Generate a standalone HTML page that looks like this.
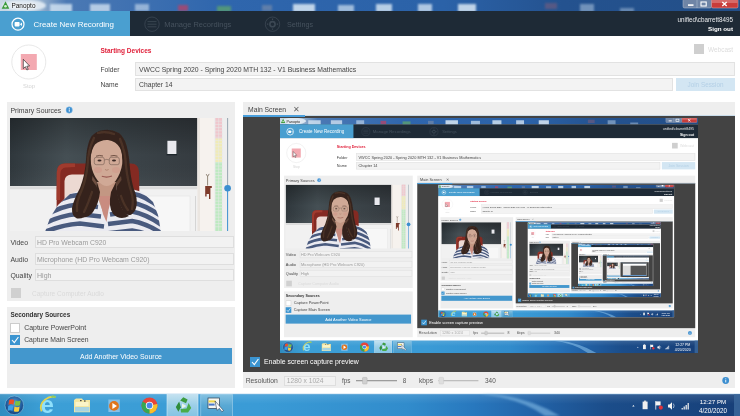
<!DOCTYPE html>
<html><head><meta charset="utf-8"><title>Panopto</title>
<style>
html,body{margin:0;padding:0;background:#fff;}
body{width:740px;height:416px;overflow:hidden;font-family:"Liberation Sans",sans-serif;}
.screen{position:absolute;left:0;top:0;width:740px;height:416px;overflow:hidden;background:#fff;}
.root{position:absolute;left:0;top:0;width:740px;height:416px;overflow:hidden;filter:blur(0.35px);}
.b{position:absolute;box-sizing:border-box;}
.t{position:absolute;line-height:10px;height:10px;white-space:nowrap;}
.titlebar{position:absolute;left:0;top:0;width:740px;height:11px;background:#3468ab;}
.navbar{left:0;top:11px;width:740px;height:25px;background:#1e2a36;}
.tab{left:0;top:11px;width:130px;height:25px;background:#4a9fd0;}
.inp{background:#f3f3f3;border:0.5px solid #e2e2e2;}
.inp2{background:#f2f2f2;border:0.5px solid #dedede;}
.panel{background:#eeeeee;}
.taskbar{position:absolute;left:0;top:394px;width:740px;height:22px;background:linear-gradient(180deg,rgba(255,255,255,0.12) 0%,rgba(255,255,255,0) 45%),linear-gradient(90deg,#2f8cc0 0%,#3c9fd6 6%,#3a9bd6 35%,#318ccc 55%,#2878be 64%,#2263a8 72%,#1b4d8a 82%,#173f78 100%);}
.nest{position:absolute;left:279.7px;top:118.4px;width:740px;height:416px;transform:scale(0.5649);transform-origin:0 0;overflow:hidden;filter:blur(0.8px);}
svg{position:absolute;overflow:visible}
</style></head>
<body>
<div class="root"><div class="screen">
<div class="titlebar"></div>
<div class="b navbar"></div>
<div class="b tab"></div>
<div class="b" style="left:0;top:36px;width:740px;height:358px;background:#fff"></div>
<div class="b inp" style="left:135px;top:62px;width:600px;height:14px"></div>
<div class="b inp" style="left:135px;top:78px;width:538px;height:13px"></div>
<div class="b" style="left:676px;top:78px;width:59px;height:13px;background:#d3e6f3"></div>
<div class="b" style="left:694px;top:44px;width:10px;height:10px;background:#cfcfcf"></div>
<div class="b panel" style="left:7px;top:102px;width:228px;height:199px"></div>
<div class="b panel" style="left:7px;top:307px;width:228px;height:81px"></div>
<div class="b panel" style="left:243px;top:102px;width:492px;height:286px"></div>
<div class="b" style="left:243px;top:115.4px;width:492px;height:256.6px;background:#434343;border-top:1.2px solid #c9dcea"></div><div class="b" style="left:243px;top:115.4px;width:62px;height:1.3px;background:#4a9fdc"></div>
<div class="b inp2" style="left:35px;top:236px;width:198.5px;height:12px"></div>
<div class="b inp2" style="left:35px;top:253px;width:198.5px;height:12px"></div>
<div class="b inp2" style="left:35px;top:269px;width:198.5px;height:12px"></div>
<div class="b" style="left:11px;top:288px;width:10px;height:10px;background:#d0d0d0"></div>
<div class="b" style="left:10px;top:323px;width:10px;height:10px;background:#fff;border:0.5px solid #ccc"></div>
<div class="b" style="left:10px;top:335px;width:10px;height:10px;background:#3b94d0"></div>
<div class="b" style="left:10px;top:347.5px;width:221.8px;height:16.5px;background:#4397cd"></div>
<div class="b" style="left:250px;top:357px;width:10px;height:10px;background:#3b94d0"></div>
<div class="b inp2" style="left:284px;top:375.5px;width:52px;height:10px"></div>
<div class="taskbar"></div>
<svg style="left:10px;top:118px" width="204" height="113" viewBox="10 118 204 113">
<defs>
<linearGradient id="wallg" x1="0" y1="0" x2="1" y2="0"><stop offset="0" stop-color="#2f373c"/><stop offset="0.3" stop-color="#454f54"/><stop offset="0.55" stop-color="#3d464b"/><stop offset="1" stop-color="#353b40"/></linearGradient>
<linearGradient id="wallv" x1="0" y1="0" x2="0" y2="1"><stop offset="0" stop-color="#000" stop-opacity="0.28"/><stop offset="0.55" stop-color="#000" stop-opacity="0"/><stop offset="1" stop-color="#fff" stop-opacity="0.04"/></linearGradient>
<filter id="bl" x="-5%" y="-5%" width="110%" height="110%"><feGaussianBlur stdDeviation="0.7"/></filter>
<filter id="bl2" x="-5%" y="-5%" width="110%" height="110%"><feGaussianBlur stdDeviation="0.45"/></filter>
<clipPath id="vc"><rect x="10" y="118" width="204" height="113"/></clipPath>
<clipPath id="shirtc"><path d="M45,232 L50,218 L58,205 L70,194 L84,189 L128,188 L142,192 L153,202 L158,215 L161,232 Z"/></clipPath>
</defs>
<g clip-path="url(#vc)">
<rect x="10" y="118" width="204" height="113" fill="#efefef"/>
<rect x="10" y="118" width="187.5" height="68" fill="url(#wallg)"/>
<rect x="10" y="118" width="187.5" height="68" fill="url(#wallv)"/>
<rect x="10" y="186.3" width="188" height="3.2" fill="#dcdcdc"/>
<rect x="10" y="189.5" width="188" height="42" fill="#f1f1f1"/>
<rect x="197.5" y="118" width="16.5" height="113" fill="#f6f2ee"/>
<rect x="197.5" y="118" width="2.5" height="113" fill="#ebe6e1"/>
<rect x="140" y="196" width="50" height="36" fill="#f7f7f7" stroke="#e4e4e4" stroke-width="0.6"/>
<g filter="url(#bl2)">
<rect x="167.4" y="140.8" width="9" height="13.2" fill="#e9e9ee"/>
<rect x="166.6" y="154" width="10.5" height="1.3" fill="#1e262b"/>
<path d="M207.6,176.5 l-1.4,-2.4 M207.6,176.5 l1.6,-2.6 M207.6,176.5 v9" stroke="#6a5a4a" stroke-width="0.7" fill="none"/>
<path d="M205.2,186 h6.6 v2 h-1.4 v11 h-1.4 v-5 h-2.4 v2.6 h-1.4 z" fill="#7e3a2c"/>
<rect x="195" y="196" width="0.8" height="36" fill="#cfcfcf"/>
</g>
<g filter="url(#bl)">
<path d="M56.5,232 L56.8,172 Q57,163.5 65,163.5 L131,163.5 Q138.8,163.5 139,172 L140,232 Z" fill="#842a22"/>
<path d="M64.5,232 L64.5,181 Q65,174.5 72,174.5 L125,174.5 L130,232 Z" fill="#ecd9d2"/>
<path d="M56.5,200 L56.8,172 Q57,163.5 65,163.5 L75,163.5 L75,167 L66,167.5 Q60.5,168 60.3,174 L60,200 Z" fill="#a03a2e"/>
<!-- shirt -->
<path d="M45,232 L50,218 L58,205 L70,194 L84,189 L128,188 L142,192 L153,202 L158,215 L161,232 Z" fill="#ebebf1"/>
<g clip-path="url(#shirtc)" fill="none" stroke="#4a5a7e" stroke-width="4.6">
<path d="M50,207 Q62,196.5 78,195 L96,197.5"/>
<path d="M44,216.5 Q60,206 78,204.5 L98,207"/>
<path d="M40,226 Q58,215.5 78,214 L101,216.5"/>
<path d="M38,235 Q58,225 80,223.5 L104,226.5"/>
<path d="M114,196.5 L132,193.5 Q146,196 160,208"/>
<path d="M112,205.5 L132,202.5 Q146,205 164,218"/>
<path d="M110,214.5 L132,211.5 Q148,214.5 166,228"/>
<path d="M108,224 L132,221 Q150,224 168,238"/>
<path d="M106,233.5 L132,230.5 Q150,233 166,244"/>
</g>
<!-- neck & V -->
<path d="M97.5,180 L97,196 L103,212 L107,200 L116,195 L116.5,180 Z" fill="#c39783"/>
<path d="M99,196 L103,214 L106.5,222 L108.5,210 L112,196 Z" fill="#c98c80"/>
<!-- hair back -->
<path d="M106,129.8 Q94,130 89.5,140 Q86.5,148 86,160 Q85,175 80,188 Q73.5,200 72,208 Q71.5,216 77,218.5 Q84,219.5 88.5,212 Q93,203 96,193 L97,182 L116,182 L117,194 Q119,204 123,211 Q127,216.5 131.5,214.5 Q136.5,211 136.8,203 Q137,196 133.5,188 Q130.5,177 129.5,163 Q128.5,150 125,141 Q120,129.6 106,129.8 Z" fill="#36241c"/>
<!-- face -->
<path d="M106,138 Q96,138.5 92.5,146 Q90.2,154 91,164 Q92.4,174 98,181 Q102.5,186 106.5,186 Q111,186 115.5,181 Q121,173 122.2,164 Q123,153 119.8,146 Q116,138.5 106,138 Z" fill="#d0a996"/>
<ellipse cx="98" cy="170" rx="4" ry="3" fill="#d08a80" opacity="0.35"/>
<ellipse cx="116" cy="170" rx="4" ry="3" fill="#d08a80" opacity="0.3"/>
<!-- hairline: part on left, sweeping right -->
<path d="M95,144.5 Q100.5,139.6 108,140 Q116,141.2 120,148 Q122.4,153 122.4,161 L125,150 Q122,136 108,133.5 Q96,133 92.2,141 Q90.4,147 90.6,158 Q91.4,149.5 95,144.5 Z" fill="#36241c"/>
<path d="M92.5,176 Q95,181 100,185 L97,187 L92,180 Z" fill="#a87c68" opacity="0.5"/>
<path d="M121,176 Q118,181 113,185 L116.5,187 L121.5,180 Z" fill="#a87c68" opacity="0.35"/>
<!-- hair strands front over shoulders -->
<path d="M97,182 Q95,196 90,206 Q86,214 80,217 Q88,219 93,212 Q99,203 100,192 Z" fill="#36241c"/>
<path d="M116,182 Q117,196 121,206 Q124,213 129,216 Q120,221 113,214 Q108,206 111,192 Z" fill="#36241c"/>
<g fill="none" stroke="#5e4032" stroke-width="2.2" opacity="0.55" stroke-linecap="round">
<path d="M94,138 Q88,150 87.5,166 Q86,180 81,192 Q76,202 77,211"/>
<path d="M98,133 Q106,131 114,134"/>
<path d="M120,139 Q125.5,152 126,166 Q127.5,180 131,191 Q134,200 132,209"/>
<path d="M92,192 Q88,204 84,212"/>
<path d="M121,196 Q124,205 128,210"/>
</g>
</g>
<g filter="url(#bl2)">
<g fill="none" stroke="#6a544c" stroke-width="0.55">
<rect x="94.3" y="157.3" width="10" height="7.4" rx="2"/>
<rect x="109.3" y="157.3" width="10" height="7.4" rx="2"/>
<path d="M104.3,160 Q106.8,158.8 109.3,160"/>
</g>
<ellipse cx="99.5" cy="160.6" rx="2" ry="1" fill="#3a2a26"/>
<ellipse cx="114" cy="160.6" rx="2" ry="1" fill="#3a2a26"/>
<path d="M96,156.2 Q99.5,154.8 103,156" stroke="#5a3e32" stroke-width="0.8" fill="none"/>
<path d="M110.5,156 Q114,154.8 117.5,156.2" stroke="#5a3e32" stroke-width="0.8" fill="none"/>
<path d="M105,169.5 Q106.8,171 108.6,169.5" stroke="#a87c68" stroke-width="0.8" fill="none"/>
<path d="M101.8,176.3 Q106.8,178 112,176" stroke="#9a5a52" stroke-width="1.1" fill="none"/>
</g>
</g>
</svg>

<svg style="left:0;top:0" width="740" height="416" viewBox="0 0 740 416">
<defs>
<filter id="b1" x="-20%" y="-20%" width="140%" height="140%"><feGaussianBlur stdDeviation="1.2"/></filter>
<filter id="b05" x="-20%" y="-20%" width="140%" height="140%"><feGaussianBlur stdDeviation="0.4"/></filter>
<linearGradient id="tbg" x1="0" y1="0" x2="1" y2="0">
<stop offset="0" stop-color="#c9d8e6"/><stop offset="0.05" stop-color="#9db6d0"/><stop offset="0.09" stop-color="#4b79b4"/><stop offset="0.3" stop-color="#2f66ad"/><stop offset="0.6" stop-color="#2b62a8"/><stop offset="0.76" stop-color="#24528f"/><stop offset="1" stop-color="#234f88"/>
</linearGradient>
<radialGradient id="orb" cx="0.5" cy="0.4" r="0.6"><stop offset="0" stop-color="#5aa0d8"/><stop offset="0.7" stop-color="#1f5a9a"/><stop offset="1" stop-color="#173f78"/></radialGradient>
<linearGradient id="tbtn1" x1="0" y1="0" x2="0" y2="1"><stop offset="0" stop-color="#c4e2f0"/><stop offset="0.5" stop-color="#9ccfe8"/><stop offset="1" stop-color="#84c4e4"/></linearGradient>
<linearGradient id="tbtn2" x1="0" y1="0" x2="0" y2="1"><stop offset="0" stop-color="#86c2e2"/><stop offset="0.5" stop-color="#5aa9d4"/><stop offset="1" stop-color="#4a9fd0"/></linearGradient>
<clipPath id="tbc"><rect x="0" y="0" width="740" height="11"/></clipPath>
</defs>
<!-- title bar -->
<g clip-path="url(#tbc)">
<rect x="0" y="0" width="740" height="11" fill="url(#tbg)"/>
<g filter="url(#b1)" fill="#cfe0f0">
<rect x="50" y="4" width="22" height="8" opacity="0.85"/>
<rect x="90" y="4" width="20" height="8" opacity="0.8"/>
<rect x="135" y="4" width="14" height="7" opacity="0.6"/>
<rect x="217" y="6" width="14" height="6" fill="#5aa070" opacity="0.8"/>
<rect x="178" y="5" width="10" height="6" fill="#c04060" opacity="0.7"/>
<rect x="262" y="5" width="10" height="6" fill="#8090a8" opacity="0.6"/>
<rect x="293" y="4" width="22" height="8" opacity="0.9"/>
<rect x="338" y="5" width="16" height="7" opacity="0.7"/>
<rect x="376" y="4" width="16" height="8" opacity="0.85"/>
<rect x="418" y="4" width="14" height="8" opacity="0.8"/>
<rect x="458" y="4" width="18" height="8" opacity="0.9"/>
<rect x="580" y="4" width="14" height="8" opacity="0.45"/>
<rect x="620" y="8" width="14" height="4" opacity="0.4"/>
<rect x="545" y="3" width="12" height="6" fill="#a06070" opacity="0.4"/>
</g>
<ellipse cx="24" cy="5.5" rx="22" ry="6" fill="#e4edf5" filter="url(#b1)" opacity="0.9"/>
<!-- panopto tiny icon -->
<path d="M5.5,1.2 L9.3,8.8 L1.7,8.8 Z" fill="#3a9a3c"/>
<circle cx="5.5" cy="6.2" r="1.3" fill="#d8f0d0"/>
<!-- window buttons -->
<rect x="683" y="-1" width="28.5" height="9" rx="1.5" fill="#7488a8" stroke="#b8c4d4" stroke-width="0.5" opacity="0.95"/>
<rect x="711.5" y="-1" width="26.5" height="9" rx="1.5" fill="#c83c3a" stroke="#e0b0b0" stroke-width="0.5"/><rect x="712" y="0" width="25.5" height="3" fill="#e08888" opacity="0.6"/>
<line x1="697" y1="0" x2="697" y2="8" stroke="#c8d4e4" stroke-width="0.4"/>
<rect x="688" y="4.3" width="5.5" height="1.6" fill="#fff"/>
<rect x="701" y="2" width="5.2" height="4" fill="none" stroke="#fff" stroke-width="1.1"/>
<path d="M722.3,2 L726.7,6 M726.7,2 L722.3,6" stroke="#fff" stroke-width="1.3"/>
</g>
<!-- nav icons -->
<circle cx="18" cy="24.2" r="6" fill="none" stroke="#fff" stroke-width="1.2"/>
<rect x="14.6" y="22" width="5" height="4.4" rx="0.8" fill="#fff"/>
<path d="M19.9,24.2 L22,22.4 V26 Z" fill="#fff"/>
<g stroke="#3c4854" fill="none" stroke-width="0.8">
<circle cx="152" cy="24.2" r="7.2"/>
<path d="M147.5,21.6 H156.5 M147.5,24.2 H156.5 M147.5,26.8 H156.5" stroke-width="0.9"/>
<circle cx="272.5" cy="24.2" r="7.2"/>
<circle cx="272.5" cy="24.2" r="2.6" stroke-width="1.6"/>
<path d="M272.5,20 v-1.4 M272.5,28.4 v1.4 M268.3,24.2 h-1.4 M276.7,24.2 h1.4" stroke-width="1.2"/>
</g>
<!-- stop button -->
<circle cx="28.8" cy="62" r="17" fill="#fff" stroke="#e2e2e2" stroke-width="0.8"/>
<rect x="20.8" y="54" width="16" height="16" fill="#f3a9b1"/>
<!-- cursor -->
<path d="M23.3,59.3 V68.6 L25.4,66.7 L26.9,70 L28.2,69.4 L26.8,66.2 L29.6,66 Z" fill="#fff" stroke="#111" stroke-width="0.6" stroke-linejoin="round"/>
<!-- info icons -->
<circle cx="69.2" cy="110" r="3.2" fill="#3d8fd0"/>
<circle cx="69.2" cy="110" r="3.2" fill="none" stroke="#8cc0e8" stroke-width="0.5"/>
<rect x="68.8" y="109.4" width="0.9" height="2.3" fill="#fff"/><rect x="68.8" y="107.9" width="0.9" height="0.9" fill="#fff"/>
<circle cx="725.7" cy="380.5" r="3.4" fill="#3d8fd0"/>
<rect x="725.3" y="380" width="0.9" height="2.4" fill="#fff"/><rect x="725.3" y="378.4" width="0.9" height="0.9" fill="#fff"/>
<!-- meter -->
<rect x="215" y="118" width="7.4" height="113" fill="#e8e8e8"/>
<rect x="215.4" y="118" width="6.6" height="20.5" fill="#f0c6cc"/>
<rect x="215.4" y="138.5" width="6.6" height="23.5" fill="#f0ebb6"/>
<rect x="215.4" y="162" width="6.6" height="69" fill="#bdeac0"/>
<g stroke="#e8e8e8" stroke-width="0.6">
<path d="M218.7,118 V231"/>
<path d="M215,121.2 h8 M215,124.4 h8 M215,127.6 h8 M215,130.8 h8 M215,134 h8 M215,137.2 h8 M215,140.4 h8 M215,143.6 h8 M215,146.8 h8 M215,150 h8 M215,153.2 h8 M215,156.4 h8 M215,159.6 h8 M215,162.8 h8 M215,166 h8 M215,169.2 h8 M215,172.4 h8 M215,175.6 h8 M215,178.8 h8 M215,182 h8 M215,185.2 h8 M215,188.4 h8 M215,191.6 h8 M215,194.8 h8 M215,198 h8 M215,201.2 h8 M215,204.4 h8 M215,207.6 h8 M215,210.8 h8 M215,214 h8 M215,217.2 h8 M215,220.4 h8 M215,223.6 h8 M215,226.8 h8"/>
</g>
<!-- volume slider -->
<rect x="227.1" y="118" width="1" height="70" fill="#97a5b0"/>
<rect x="227.1" y="188" width="1" height="43" fill="#3b8fd0"/>
<circle cx="227.6" cy="188.2" r="3.3" fill="#3a8fd0"/>
<!-- checkmarks -->
<path d="M12,340 L14.3,342.6 L18.4,337" stroke="#fff" stroke-width="1.1" fill="none"/>
<path d="M252,362 L254.3,364.6 L258.4,359" stroke="#fff" stroke-width="1.1" fill="none"/>
<!-- sliders -->
<rect x="356" y="380.3" width="41" height="0.9" fill="#7a7a7a"/>
<rect x="362.5" y="377.4" width="4.6" height="6.6" rx="0.8" fill="#d0d0d0" stroke="#aaa" stroke-width="0.4"/>
<rect x="438.4" y="380.3" width="40" height="0.9" fill="#aaa"/>
<rect x="439" y="377.4" width="4.6" height="6.6" rx="0.8" fill="#dedede" stroke="#c4c4c4" stroke-width="0.4"/>
<!-- taskbar -->
<g>
<rect x="0" y="394" width="740" height="22" fill="none"/>
<path d="M480,394 Q520,398 545,416 L560,416 Q530,398 492,394 Z" fill="#8cc4ec" opacity="0.55" filter="url(#b1)"/>
<rect x="0" y="393.6" width="740" height="0.8" fill="#9cc8e8" opacity="0.7"/>
<rect x="734" y="394" width="6" height="22" fill="#3d6a9e" opacity="0.8"/>
<!-- start orb -->
<circle cx="14.3" cy="405.3" r="9.3" fill="url(#orb)"/>
<circle cx="14.3" cy="405.3" r="9.3" fill="none" stroke="#8cc4e4" stroke-width="0.7" opacity="0.8"/>
<g filter="url(#b05)" transform="translate(14.3 405.5) scale(1.18) translate(-13.9 -405.5)">
<path d="M9.6,400.8 Q11.8,399.6 13.8,400.8 L13.2,404.8 Q11.2,403.8 9,404.9 Z" fill="#e8502c"/>
<path d="M14.9,401.2 Q17,402.4 19.2,401.2 L18.6,405.2 Q16.4,406.4 14.3,405.2 Z" fill="#7cc242"/>
<path d="M8.8,405.9 Q11,404.8 13,405.9 L12.4,409.9 Q10.4,408.9 8.2,410 Z" fill="#3ca0e8"/>
<path d="M14.1,406.3 Q16.2,407.5 18.4,406.3 L17.8,410.3 Q15.6,411.5 13.5,410.3 Z" fill="#f8cc3c"/>
</g>
<!-- IE -->
<g filter="url(#b05)">
<text x="40.6" y="412.6" font-family="Liberation Sans, sans-serif" font-weight="bold" font-size="24" fill="#8fe0fb">e</text>
<path d="M41.6,411.4 Q38.6,405 45,399.6 Q50.6,395.4 55.4,397" stroke="#e4d44c" stroke-width="1.7" fill="none"/>
<path d="M51.4,396.8 Q54.2,395.6 55.6,397.6" stroke="#8ccc5c" stroke-width="1.8" fill="none"/>
</g>
<!-- folder -->
<g filter="url(#b05)">
<path d="M74,400 L76,398.6 L82,398.6 L83,400 L90,400 L90,412.3 L74,412.3 Z" fill="#f3e6a2"/>
<rect x="75.5" y="402" width="13" height="4" fill="#fbf4c8"/>
<rect x="75" y="407" width="14.5" height="4.6" fill="#a8d4e2"/>
<rect x="80" y="400" width="1.6" height="1.2" fill="#444"/><rect x="84" y="400.4" width="1.6" height="1.2" fill="#444"/>
</g>
<!-- media player -->
<g filter="url(#b05)">
<rect x="108.4" y="399.5" width="11.4" height="12.5" fill="#86bfe6"/>
<circle cx="114" cy="405.9" r="4.9" fill="#e0741e"/>
<path d="M112.4,402.9 L117,405.9 L112.4,408.9 Z" fill="#fff"/>
</g>
<!-- chrome -->
<g filter="url(#b05)">
<circle cx="149.5" cy="405.5" r="8" fill="#e6443a"/>
<path d="M149.5,405.5 L142.6,401.5 A8,8 0 0 0 145.5,412.4 Z M149.5,405.5 L145.5,412.4 A8,8 0 0 0 149.6,413.5 L153.5,406.6Z" fill="#34a853"/>
<path d="M149.5,405.5 L157.4,404 A8,8 0 0 1 149.6,413.5 Z" fill="#f8c02c"/>
<circle cx="149.5" cy="405.5" r="3.7" fill="#fff"/>
<circle cx="149.5" cy="405.5" r="2.9" fill="#4a88e8"/>
</g>
<!-- panopto button -->
<rect x="167" y="394.3" width="31" height="22" fill="url(#tbtn1)" stroke="#d8ecf6" stroke-width="0.6"/>
<g filter="url(#b05)" fill="#3c9c40">
<path d="M183.3,397.2 L187.6,399.6 L186,403.2 L180.2,400.6 Z"/>
<path d="M179.2,401.6 L180.8,407.2 L178.4,411.8 L175.8,407 Z" fill="#2e8c3a"/>
<path d="M188.6,403 L191.2,408 L188,412.4 L181,412.4 L180.6,409 L186.6,408.4 Z" fill="#4cac48"/>
<path d="M182,403.4 L186.6,405.9 L182,408.4 Z" fill="#e8f6e8"/>
</g>
<!-- third button -->
<rect x="200.8" y="394.3" width="31.5" height="22" fill="url(#tbtn2)" stroke="#a8d4ec" stroke-width="0.6"/>
<g filter="url(#b05)">
<rect x="208" y="398" width="11.5" height="10.5" fill="#f6f6f0" stroke="#2c3c50" stroke-width="0.7"/>
<rect x="208.6" y="400.4" width="7" height="2" fill="#f0d848"/>
<rect x="208.6" y="403.6" width="6" height="2" fill="#4a78c8"/>
<path d="M215,401 L223.6,410.6 L221.8,411.6 L219.4,408.4 L217,410.4 Z" fill="#fff" stroke="#2c3c50" stroke-width="0.6"/>
</g>
<!-- tray -->
<path d="M632.2,406.6 L634.6,406.6 L633.4,405 Z" fill="#fff"/>
<g filter="url(#b05)">
<rect x="642.6" y="401.6" width="5" height="7.6" fill="#f0f0f0"/><rect x="644" y="400.6" width="2.2" height="1.4" fill="#ddd"/>
<path d="M655.6,401.4 h5 v4 h-5 z" fill="#f4f4f4"/><rect x="655.4" y="401" width="0.8" height="8.6" fill="#eee"/>
<circle cx="660.8" cy="407.6" r="2.1" fill="#e0303a"/>
<path d="M668,404.4 h1.6 l2.4,-2.2 v7.6 l-2.4,-2.2 h-1.6 z" fill="#f4f4f4"/>
<path d="M673.4,403.6 q1.4,2.2 0,4.4" stroke="#d8e4f0" stroke-width="0.7" fill="none"/>
<path d="M681.6,409.4 v-1.4 h1.2 v1.4 z M683.6,409.4 v-2.8 h1.2 v2.8 z M685.6,409.4 v-4.4 h1.2 v4.4 z M687.6,409.4 v-6.4 h1.2 v6.4 z" fill="#f4f4f4"/>
</g>
</g>
</svg>

<span class="t t_title" style="left:11.5px;top:0.7px;font-size:6.44px;color:#111;text-shadow:0 0 2px #fff,0 0 3px #fff,0 0 4px #fff">Panopto</span>
<span class="t t_create" style="left:33.5px;top:19.8px;font-size:7.96px;color:#fff">Create New Recording</span>
<span class="t t_manage" style="left:164.3px;top:19.8px;font-size:7.49px;color:#46525e">Manage Recordings</span>
<span class="t t_settings" style="left:287px;top:19.8px;font-size:7.19px;color:#46525e">Settings</span>
<span class="t t_user" style="right:7px;top:15.0px;font-size:6.28px;color:#e8eaec">unified\cbarrett8495</span>
<span class="t t_signout" style="right:7px;top:24.3px;font-size:6.25px;color:#fff;font-weight:bold">Sign out</span>
<span class="t t_starting" style="left:100.5px;top:45.5px;font-size:6.51px;color:#e0203a;font-weight:bold">Starting Devices</span>
<span class="t t_folder" style="left:100.5px;top:64.5px;font-size:6.70px;color:#444">Folder</span>
<span class="t t_name" style="left:100.5px;top:79.8px;font-size:6.74px;color:#444">Name</span>
<span class="t t_folderv" style="left:139px;top:64.5px;font-size:6.83px;color:#444">VWCC Spring 2020 - Spring 2020 MTH 132 - V1 Business Mathematics</span>
<span class="t t_namev" style="left:139px;top:79.8px;font-size:6.77px;color:#444">Chapter 14</span>
<span class="t t_stop" style="left:-71px;width:200px;text-align:center;top:81.0px;font-size:5.83px;color:#d4d4d4">Stop</span>
<span class="t t_webcast" style="left:708px;top:45.0px;font-size:6.46px;color:#dcdcdc">Webcast</span>
<span class="t t_join" style="left:605.5px;width:200px;text-align:center;top:80.0px;font-size:6.35px;color:#b4d0e6">Join Session</span>
<span class="t t_primary" style="left:10.4px;top:105.5px;font-size:6.90px;color:#444">Primary Sources</span>
<span class="t t_main" style="left:248px;top:104.5px;font-size:6.77px;color:#444">Main Screen</span>
<span class="t t_x" style="left:196.5px;width:200px;text-align:center;top:104.8px;font-size:7.60px;color:#666">✕</span>
<span class="t t_video" style="left:10.4px;top:237.8px;font-size:6.97px;color:#444">Video</span>
<span class="t t_audio" style="left:10.4px;top:254.5px;font-size:6.92px;color:#444">Audio</span>
<span class="t t_quality" style="left:10.4px;top:270.5px;font-size:6.90px;color:#444">Quality</span>
<span class="t t_videov" style="left:37px;top:237.8px;font-size:6.83px;color:#9a9a9a">HD Pro Webcam C920</span>
<span class="t t_audiov" style="left:37px;top:254.5px;font-size:6.90px;color:#9a9a9a">Microphone (HD Pro Webcam C920)</span>
<span class="t t_qualityv" style="left:37px;top:270.5px;font-size:7.05px;color:#9a9a9a">High</span>
<span class="t t_cca" style="left:32px;top:289.3px;font-size:6.54px;color:#dadada">Capture Computer Audio</span>
<span class="t t_secondary" style="left:10.4px;top:310.2px;font-size:6.42px;color:#333;font-weight:bold">Secondary Sources</span>
<span class="t t_cpp" style="left:24.2px;top:323.0px;font-size:6.93px;color:#444">Capture PowerPoint</span>
<span class="t t_cms" style="left:24.2px;top:335.1px;font-size:6.82px;color:#444">Capture Main Screen</span>
<span class="t t_add" style="left:21px;width:200px;text-align:center;top:351.5px;font-size:6.97px;color:#fff">Add Another Video Source</span>
<span class="t t_enable" style="left:264px;top:357.1px;font-size:6.92px;color:#fff">Enable screen capture preview</span>
<span class="t t_res" style="left:245.7px;top:376.1px;font-size:6.77px;color:#555">Resolution</span>
<span class="t t_resv" style="left:286.8px;top:376.1px;font-size:6.68px;color:#aaa">1280 x 1024</span>
<span class="t t_fps" style="left:342px;top:376.1px;font-size:6.37px;color:#555">fps</span>
<span class="t t_fpsv" style="left:402.7px;top:376.1px;font-size:6.27px;color:#555">8</span>
<span class="t t_kbps" style="left:419px;top:376.1px;font-size:6.62px;color:#555">kbps</span>
<span class="t t_kbpsv" style="left:485px;top:376.1px;font-size:6.41px;color:#555">340</span>
<span class="t t_time" style="left:613px;width:200px;text-align:center;top:397.1px;font-size:6.19px;color:#fff">12:27 PM</span>
<span class="t t_date" style="left:613px;width:200px;text-align:center;top:406.3px;font-size:6.29px;color:#fff">4/20/2020</span>
<div class="nest"><div class="screen">
<div class="titlebar"></div>
<div class="b navbar"></div>
<div class="b tab"></div>
<div class="b" style="left:0;top:36px;width:740px;height:358px;background:#fff"></div>
<div class="b inp" style="left:135px;top:62px;width:600px;height:14px"></div>
<div class="b inp" style="left:135px;top:78px;width:538px;height:13px"></div>
<div class="b" style="left:676px;top:78px;width:59px;height:13px;background:#d3e6f3"></div>
<div class="b" style="left:694px;top:44px;width:10px;height:10px;background:#cfcfcf"></div>
<div class="b panel" style="left:7px;top:102px;width:228px;height:199px"></div>
<div class="b panel" style="left:7px;top:307px;width:228px;height:81px"></div>
<div class="b panel" style="left:243px;top:102px;width:492px;height:286px"></div>
<div class="b" style="left:243px;top:115.4px;width:492px;height:256.6px;background:#434343;border-top:1.2px solid #c9dcea"></div><div class="b" style="left:243px;top:115.4px;width:62px;height:1.3px;background:#4a9fdc"></div>
<div class="b inp2" style="left:35px;top:236px;width:198.5px;height:12px"></div>
<div class="b inp2" style="left:35px;top:253px;width:198.5px;height:12px"></div>
<div class="b inp2" style="left:35px;top:269px;width:198.5px;height:12px"></div>
<div class="b" style="left:11px;top:288px;width:10px;height:10px;background:#d0d0d0"></div>
<div class="b" style="left:10px;top:323px;width:10px;height:10px;background:#fff;border:0.5px solid #ccc"></div>
<div class="b" style="left:10px;top:335px;width:10px;height:10px;background:#3b94d0"></div>
<div class="b" style="left:10px;top:347.5px;width:221.8px;height:16.5px;background:#4397cd"></div>
<div class="b" style="left:250px;top:357px;width:10px;height:10px;background:#3b94d0"></div>
<div class="b inp2" style="left:284px;top:375.5px;width:52px;height:10px"></div>
<div class="taskbar"></div>
<svg style="left:10px;top:118px" width="204" height="113" viewBox="10 118 204 113">
<defs>
<linearGradient id="wallg" x1="0" y1="0" x2="1" y2="0"><stop offset="0" stop-color="#2f373c"/><stop offset="0.3" stop-color="#454f54"/><stop offset="0.55" stop-color="#3d464b"/><stop offset="1" stop-color="#353b40"/></linearGradient>
<linearGradient id="wallv" x1="0" y1="0" x2="0" y2="1"><stop offset="0" stop-color="#000" stop-opacity="0.28"/><stop offset="0.55" stop-color="#000" stop-opacity="0"/><stop offset="1" stop-color="#fff" stop-opacity="0.04"/></linearGradient>
<filter id="bl" x="-5%" y="-5%" width="110%" height="110%"><feGaussianBlur stdDeviation="0.7"/></filter>
<filter id="bl2" x="-5%" y="-5%" width="110%" height="110%"><feGaussianBlur stdDeviation="0.45"/></filter>
<clipPath id="vc"><rect x="10" y="118" width="204" height="113"/></clipPath>
<clipPath id="shirtc"><path d="M45,232 L50,218 L58,205 L70,194 L84,189 L128,188 L142,192 L153,202 L158,215 L161,232 Z"/></clipPath>
</defs>
<g clip-path="url(#vc)">
<rect x="10" y="118" width="204" height="113" fill="#efefef"/>
<rect x="10" y="118" width="187.5" height="68" fill="url(#wallg)"/>
<rect x="10" y="118" width="187.5" height="68" fill="url(#wallv)"/>
<rect x="10" y="186.3" width="188" height="3.2" fill="#dcdcdc"/>
<rect x="10" y="189.5" width="188" height="42" fill="#f1f1f1"/>
<rect x="197.5" y="118" width="16.5" height="113" fill="#f6f2ee"/>
<rect x="197.5" y="118" width="2.5" height="113" fill="#ebe6e1"/>
<rect x="140" y="196" width="50" height="36" fill="#f7f7f7" stroke="#e4e4e4" stroke-width="0.6"/>
<g filter="url(#bl2)">
<rect x="167.4" y="140.8" width="9" height="13.2" fill="#e9e9ee"/>
<rect x="166.6" y="154" width="10.5" height="1.3" fill="#1e262b"/>
<path d="M207.6,176.5 l-1.4,-2.4 M207.6,176.5 l1.6,-2.6 M207.6,176.5 v9" stroke="#6a5a4a" stroke-width="0.7" fill="none"/>
<path d="M205.2,186 h6.6 v2 h-1.4 v11 h-1.4 v-5 h-2.4 v2.6 h-1.4 z" fill="#7e3a2c"/>
<rect x="195" y="196" width="0.8" height="36" fill="#cfcfcf"/>
</g>
<g filter="url(#bl)">
<path d="M56.5,232 L56.8,172 Q57,163.5 65,163.5 L131,163.5 Q138.8,163.5 139,172 L140,232 Z" fill="#842a22"/>
<path d="M64.5,232 L64.5,181 Q65,174.5 72,174.5 L125,174.5 L130,232 Z" fill="#ecd9d2"/>
<path d="M56.5,200 L56.8,172 Q57,163.5 65,163.5 L75,163.5 L75,167 L66,167.5 Q60.5,168 60.3,174 L60,200 Z" fill="#a03a2e"/>
<!-- shirt -->
<path d="M45,232 L50,218 L58,205 L70,194 L84,189 L128,188 L142,192 L153,202 L158,215 L161,232 Z" fill="#ebebf1"/>
<g clip-path="url(#shirtc)" fill="none" stroke="#4a5a7e" stroke-width="4.6">
<path d="M50,207 Q62,196.5 78,195 L96,197.5"/>
<path d="M44,216.5 Q60,206 78,204.5 L98,207"/>
<path d="M40,226 Q58,215.5 78,214 L101,216.5"/>
<path d="M38,235 Q58,225 80,223.5 L104,226.5"/>
<path d="M114,196.5 L132,193.5 Q146,196 160,208"/>
<path d="M112,205.5 L132,202.5 Q146,205 164,218"/>
<path d="M110,214.5 L132,211.5 Q148,214.5 166,228"/>
<path d="M108,224 L132,221 Q150,224 168,238"/>
<path d="M106,233.5 L132,230.5 Q150,233 166,244"/>
</g>
<!-- neck & V -->
<path d="M97.5,180 L97,196 L103,212 L107,200 L116,195 L116.5,180 Z" fill="#c39783"/>
<path d="M99,196 L103,214 L106.5,222 L108.5,210 L112,196 Z" fill="#c98c80"/>
<!-- hair back -->
<path d="M106,129.8 Q94,130 89.5,140 Q86.5,148 86,160 Q85,175 80,188 Q73.5,200 72,208 Q71.5,216 77,218.5 Q84,219.5 88.5,212 Q93,203 96,193 L97,182 L116,182 L117,194 Q119,204 123,211 Q127,216.5 131.5,214.5 Q136.5,211 136.8,203 Q137,196 133.5,188 Q130.5,177 129.5,163 Q128.5,150 125,141 Q120,129.6 106,129.8 Z" fill="#36241c"/>
<!-- face -->
<path d="M106,138 Q96,138.5 92.5,146 Q90.2,154 91,164 Q92.4,174 98,181 Q102.5,186 106.5,186 Q111,186 115.5,181 Q121,173 122.2,164 Q123,153 119.8,146 Q116,138.5 106,138 Z" fill="#d0a996"/>
<ellipse cx="98" cy="170" rx="4" ry="3" fill="#d08a80" opacity="0.35"/>
<ellipse cx="116" cy="170" rx="4" ry="3" fill="#d08a80" opacity="0.3"/>
<!-- hairline: part on left, sweeping right -->
<path d="M95,144.5 Q100.5,139.6 108,140 Q116,141.2 120,148 Q122.4,153 122.4,161 L125,150 Q122,136 108,133.5 Q96,133 92.2,141 Q90.4,147 90.6,158 Q91.4,149.5 95,144.5 Z" fill="#36241c"/>
<path d="M92.5,176 Q95,181 100,185 L97,187 L92,180 Z" fill="#a87c68" opacity="0.5"/>
<path d="M121,176 Q118,181 113,185 L116.5,187 L121.5,180 Z" fill="#a87c68" opacity="0.35"/>
<!-- hair strands front over shoulders -->
<path d="M97,182 Q95,196 90,206 Q86,214 80,217 Q88,219 93,212 Q99,203 100,192 Z" fill="#36241c"/>
<path d="M116,182 Q117,196 121,206 Q124,213 129,216 Q120,221 113,214 Q108,206 111,192 Z" fill="#36241c"/>
<g fill="none" stroke="#5e4032" stroke-width="2.2" opacity="0.55" stroke-linecap="round">
<path d="M94,138 Q88,150 87.5,166 Q86,180 81,192 Q76,202 77,211"/>
<path d="M98,133 Q106,131 114,134"/>
<path d="M120,139 Q125.5,152 126,166 Q127.5,180 131,191 Q134,200 132,209"/>
<path d="M92,192 Q88,204 84,212"/>
<path d="M121,196 Q124,205 128,210"/>
</g>
</g>
<g filter="url(#bl2)">
<g fill="none" stroke="#6a544c" stroke-width="0.55">
<rect x="94.3" y="157.3" width="10" height="7.4" rx="2"/>
<rect x="109.3" y="157.3" width="10" height="7.4" rx="2"/>
<path d="M104.3,160 Q106.8,158.8 109.3,160"/>
</g>
<ellipse cx="99.5" cy="160.6" rx="2" ry="1" fill="#3a2a26"/>
<ellipse cx="114" cy="160.6" rx="2" ry="1" fill="#3a2a26"/>
<path d="M96,156.2 Q99.5,154.8 103,156" stroke="#5a3e32" stroke-width="0.8" fill="none"/>
<path d="M110.5,156 Q114,154.8 117.5,156.2" stroke="#5a3e32" stroke-width="0.8" fill="none"/>
<path d="M105,169.5 Q106.8,171 108.6,169.5" stroke="#a87c68" stroke-width="0.8" fill="none"/>
<path d="M101.8,176.3 Q106.8,178 112,176" stroke="#9a5a52" stroke-width="1.1" fill="none"/>
</g>
</g>
</svg>

<svg style="left:0;top:0" width="740" height="416" viewBox="0 0 740 416">
<defs>
<filter id="b1" x="-20%" y="-20%" width="140%" height="140%"><feGaussianBlur stdDeviation="1.2"/></filter>
<filter id="b05" x="-20%" y="-20%" width="140%" height="140%"><feGaussianBlur stdDeviation="0.4"/></filter>
<linearGradient id="tbg" x1="0" y1="0" x2="1" y2="0">
<stop offset="0" stop-color="#c9d8e6"/><stop offset="0.05" stop-color="#9db6d0"/><stop offset="0.09" stop-color="#4b79b4"/><stop offset="0.3" stop-color="#2f66ad"/><stop offset="0.6" stop-color="#2b62a8"/><stop offset="0.76" stop-color="#24528f"/><stop offset="1" stop-color="#234f88"/>
</linearGradient>
<radialGradient id="orb" cx="0.5" cy="0.4" r="0.6"><stop offset="0" stop-color="#5aa0d8"/><stop offset="0.7" stop-color="#1f5a9a"/><stop offset="1" stop-color="#173f78"/></radialGradient>
<linearGradient id="tbtn1" x1="0" y1="0" x2="0" y2="1"><stop offset="0" stop-color="#c4e2f0"/><stop offset="0.5" stop-color="#9ccfe8"/><stop offset="1" stop-color="#84c4e4"/></linearGradient>
<linearGradient id="tbtn2" x1="0" y1="0" x2="0" y2="1"><stop offset="0" stop-color="#86c2e2"/><stop offset="0.5" stop-color="#5aa9d4"/><stop offset="1" stop-color="#4a9fd0"/></linearGradient>
<clipPath id="tbc"><rect x="0" y="0" width="740" height="11"/></clipPath>
</defs>
<!-- title bar -->
<g clip-path="url(#tbc)">
<rect x="0" y="0" width="740" height="11" fill="url(#tbg)"/>
<g filter="url(#b1)" fill="#cfe0f0">
<rect x="50" y="4" width="22" height="8" opacity="0.85"/>
<rect x="90" y="4" width="20" height="8" opacity="0.8"/>
<rect x="135" y="4" width="14" height="7" opacity="0.6"/>
<rect x="217" y="6" width="14" height="6" fill="#5aa070" opacity="0.8"/>
<rect x="178" y="5" width="10" height="6" fill="#c04060" opacity="0.7"/>
<rect x="262" y="5" width="10" height="6" fill="#8090a8" opacity="0.6"/>
<rect x="293" y="4" width="22" height="8" opacity="0.9"/>
<rect x="338" y="5" width="16" height="7" opacity="0.7"/>
<rect x="376" y="4" width="16" height="8" opacity="0.85"/>
<rect x="418" y="4" width="14" height="8" opacity="0.8"/>
<rect x="458" y="4" width="18" height="8" opacity="0.9"/>
<rect x="580" y="4" width="14" height="8" opacity="0.45"/>
<rect x="620" y="8" width="14" height="4" opacity="0.4"/>
<rect x="545" y="3" width="12" height="6" fill="#a06070" opacity="0.4"/>
</g>
<ellipse cx="24" cy="5.5" rx="22" ry="6" fill="#e4edf5" filter="url(#b1)" opacity="0.9"/>
<!-- panopto tiny icon -->
<path d="M5.5,1.2 L9.3,8.8 L1.7,8.8 Z" fill="#3a9a3c"/>
<circle cx="5.5" cy="6.2" r="1.3" fill="#d8f0d0"/>
<!-- window buttons -->
<rect x="683" y="-1" width="28.5" height="9" rx="1.5" fill="#7488a8" stroke="#b8c4d4" stroke-width="0.5" opacity="0.95"/>
<rect x="711.5" y="-1" width="26.5" height="9" rx="1.5" fill="#c83c3a" stroke="#e0b0b0" stroke-width="0.5"/><rect x="712" y="0" width="25.5" height="3" fill="#e08888" opacity="0.6"/>
<line x1="697" y1="0" x2="697" y2="8" stroke="#c8d4e4" stroke-width="0.4"/>
<rect x="688" y="4.3" width="5.5" height="1.6" fill="#fff"/>
<rect x="701" y="2" width="5.2" height="4" fill="none" stroke="#fff" stroke-width="1.1"/>
<path d="M722.3,2 L726.7,6 M726.7,2 L722.3,6" stroke="#fff" stroke-width="1.3"/>
</g>
<!-- nav icons -->
<circle cx="18" cy="24.2" r="6" fill="none" stroke="#fff" stroke-width="1.2"/>
<rect x="14.6" y="22" width="5" height="4.4" rx="0.8" fill="#fff"/>
<path d="M19.9,24.2 L22,22.4 V26 Z" fill="#fff"/>
<g stroke="#3c4854" fill="none" stroke-width="0.8">
<circle cx="152" cy="24.2" r="7.2"/>
<path d="M147.5,21.6 H156.5 M147.5,24.2 H156.5 M147.5,26.8 H156.5" stroke-width="0.9"/>
<circle cx="272.5" cy="24.2" r="7.2"/>
<circle cx="272.5" cy="24.2" r="2.6" stroke-width="1.6"/>
<path d="M272.5,20 v-1.4 M272.5,28.4 v1.4 M268.3,24.2 h-1.4 M276.7,24.2 h1.4" stroke-width="1.2"/>
</g>
<!-- stop button -->
<circle cx="28.8" cy="62" r="17" fill="#fff" stroke="#e2e2e2" stroke-width="0.8"/>
<rect x="20.8" y="54" width="16" height="16" fill="#f3a9b1"/>
<!-- cursor -->
<path d="M23.3,59.3 V68.6 L25.4,66.7 L26.9,70 L28.2,69.4 L26.8,66.2 L29.6,66 Z" fill="#fff" stroke="#111" stroke-width="0.6" stroke-linejoin="round"/>
<!-- info icons -->
<circle cx="69.2" cy="110" r="3.2" fill="#3d8fd0"/>
<circle cx="69.2" cy="110" r="3.2" fill="none" stroke="#8cc0e8" stroke-width="0.5"/>
<rect x="68.8" y="109.4" width="0.9" height="2.3" fill="#fff"/><rect x="68.8" y="107.9" width="0.9" height="0.9" fill="#fff"/>
<circle cx="725.7" cy="380.5" r="3.4" fill="#3d8fd0"/>
<rect x="725.3" y="380" width="0.9" height="2.4" fill="#fff"/><rect x="725.3" y="378.4" width="0.9" height="0.9" fill="#fff"/>
<!-- meter -->
<rect x="215" y="118" width="7.4" height="113" fill="#e8e8e8"/>
<rect x="215.4" y="118" width="6.6" height="20.5" fill="#f0c6cc"/>
<rect x="215.4" y="138.5" width="6.6" height="23.5" fill="#f0ebb6"/>
<rect x="215.4" y="162" width="6.6" height="69" fill="#bdeac0"/>
<g stroke="#e8e8e8" stroke-width="0.6">
<path d="M218.7,118 V231"/>
<path d="M215,121.2 h8 M215,124.4 h8 M215,127.6 h8 M215,130.8 h8 M215,134 h8 M215,137.2 h8 M215,140.4 h8 M215,143.6 h8 M215,146.8 h8 M215,150 h8 M215,153.2 h8 M215,156.4 h8 M215,159.6 h8 M215,162.8 h8 M215,166 h8 M215,169.2 h8 M215,172.4 h8 M215,175.6 h8 M215,178.8 h8 M215,182 h8 M215,185.2 h8 M215,188.4 h8 M215,191.6 h8 M215,194.8 h8 M215,198 h8 M215,201.2 h8 M215,204.4 h8 M215,207.6 h8 M215,210.8 h8 M215,214 h8 M215,217.2 h8 M215,220.4 h8 M215,223.6 h8 M215,226.8 h8"/>
</g>
<!-- volume slider -->
<rect x="227.1" y="118" width="1" height="70" fill="#97a5b0"/>
<rect x="227.1" y="188" width="1" height="43" fill="#3b8fd0"/>
<circle cx="227.6" cy="188.2" r="3.3" fill="#3a8fd0"/>
<!-- checkmarks -->
<path d="M12,340 L14.3,342.6 L18.4,337" stroke="#fff" stroke-width="1.1" fill="none"/>
<path d="M252,362 L254.3,364.6 L258.4,359" stroke="#fff" stroke-width="1.1" fill="none"/>
<!-- sliders -->
<rect x="356" y="380.3" width="41" height="0.9" fill="#7a7a7a"/>
<rect x="362.5" y="377.4" width="4.6" height="6.6" rx="0.8" fill="#d0d0d0" stroke="#aaa" stroke-width="0.4"/>
<rect x="438.4" y="380.3" width="40" height="0.9" fill="#aaa"/>
<rect x="439" y="377.4" width="4.6" height="6.6" rx="0.8" fill="#dedede" stroke="#c4c4c4" stroke-width="0.4"/>
<!-- taskbar -->
<g>
<rect x="0" y="394" width="740" height="22" fill="none"/>
<path d="M480,394 Q520,398 545,416 L560,416 Q530,398 492,394 Z" fill="#8cc4ec" opacity="0.55" filter="url(#b1)"/>
<rect x="0" y="393.6" width="740" height="0.8" fill="#9cc8e8" opacity="0.7"/>
<rect x="734" y="394" width="6" height="22" fill="#3d6a9e" opacity="0.8"/>
<!-- start orb -->
<circle cx="14.3" cy="405.3" r="9.3" fill="url(#orb)"/>
<circle cx="14.3" cy="405.3" r="9.3" fill="none" stroke="#8cc4e4" stroke-width="0.7" opacity="0.8"/>
<g filter="url(#b05)" transform="translate(14.3 405.5) scale(1.18) translate(-13.9 -405.5)">
<path d="M9.6,400.8 Q11.8,399.6 13.8,400.8 L13.2,404.8 Q11.2,403.8 9,404.9 Z" fill="#e8502c"/>
<path d="M14.9,401.2 Q17,402.4 19.2,401.2 L18.6,405.2 Q16.4,406.4 14.3,405.2 Z" fill="#7cc242"/>
<path d="M8.8,405.9 Q11,404.8 13,405.9 L12.4,409.9 Q10.4,408.9 8.2,410 Z" fill="#3ca0e8"/>
<path d="M14.1,406.3 Q16.2,407.5 18.4,406.3 L17.8,410.3 Q15.6,411.5 13.5,410.3 Z" fill="#f8cc3c"/>
</g>
<!-- IE -->
<g filter="url(#b05)">
<text x="40.6" y="412.6" font-family="Liberation Sans, sans-serif" font-weight="bold" font-size="24" fill="#8fe0fb">e</text>
<path d="M41.6,411.4 Q38.6,405 45,399.6 Q50.6,395.4 55.4,397" stroke="#e4d44c" stroke-width="1.7" fill="none"/>
<path d="M51.4,396.8 Q54.2,395.6 55.6,397.6" stroke="#8ccc5c" stroke-width="1.8" fill="none"/>
</g>
<!-- folder -->
<g filter="url(#b05)">
<path d="M74,400 L76,398.6 L82,398.6 L83,400 L90,400 L90,412.3 L74,412.3 Z" fill="#f3e6a2"/>
<rect x="75.5" y="402" width="13" height="4" fill="#fbf4c8"/>
<rect x="75" y="407" width="14.5" height="4.6" fill="#a8d4e2"/>
<rect x="80" y="400" width="1.6" height="1.2" fill="#444"/><rect x="84" y="400.4" width="1.6" height="1.2" fill="#444"/>
</g>
<!-- media player -->
<g filter="url(#b05)">
<rect x="108.4" y="399.5" width="11.4" height="12.5" fill="#86bfe6"/>
<circle cx="114" cy="405.9" r="4.9" fill="#e0741e"/>
<path d="M112.4,402.9 L117,405.9 L112.4,408.9 Z" fill="#fff"/>
</g>
<!-- chrome -->
<g filter="url(#b05)">
<circle cx="149.5" cy="405.5" r="8" fill="#e6443a"/>
<path d="M149.5,405.5 L142.6,401.5 A8,8 0 0 0 145.5,412.4 Z M149.5,405.5 L145.5,412.4 A8,8 0 0 0 149.6,413.5 L153.5,406.6Z" fill="#34a853"/>
<path d="M149.5,405.5 L157.4,404 A8,8 0 0 1 149.6,413.5 Z" fill="#f8c02c"/>
<circle cx="149.5" cy="405.5" r="3.7" fill="#fff"/>
<circle cx="149.5" cy="405.5" r="2.9" fill="#4a88e8"/>
</g>
<!-- panopto button -->
<rect x="167" y="394.3" width="31" height="22" fill="url(#tbtn1)" stroke="#d8ecf6" stroke-width="0.6"/>
<g filter="url(#b05)" fill="#3c9c40">
<path d="M183.3,397.2 L187.6,399.6 L186,403.2 L180.2,400.6 Z"/>
<path d="M179.2,401.6 L180.8,407.2 L178.4,411.8 L175.8,407 Z" fill="#2e8c3a"/>
<path d="M188.6,403 L191.2,408 L188,412.4 L181,412.4 L180.6,409 L186.6,408.4 Z" fill="#4cac48"/>
<path d="M182,403.4 L186.6,405.9 L182,408.4 Z" fill="#e8f6e8"/>
</g>
<!-- third button -->
<rect x="200.8" y="394.3" width="31.5" height="22" fill="url(#tbtn2)" stroke="#a8d4ec" stroke-width="0.6"/>
<g filter="url(#b05)">
<rect x="208" y="398" width="11.5" height="10.5" fill="#f6f6f0" stroke="#2c3c50" stroke-width="0.7"/>
<rect x="208.6" y="400.4" width="7" height="2" fill="#f0d848"/>
<rect x="208.6" y="403.6" width="6" height="2" fill="#4a78c8"/>
<path d="M215,401 L223.6,410.6 L221.8,411.6 L219.4,408.4 L217,410.4 Z" fill="#fff" stroke="#2c3c50" stroke-width="0.6"/>
</g>
<!-- tray -->
<path d="M632.2,406.6 L634.6,406.6 L633.4,405 Z" fill="#fff"/>
<g filter="url(#b05)">
<rect x="642.6" y="401.6" width="5" height="7.6" fill="#f0f0f0"/><rect x="644" y="400.6" width="2.2" height="1.4" fill="#ddd"/>
<path d="M655.6,401.4 h5 v4 h-5 z" fill="#f4f4f4"/><rect x="655.4" y="401" width="0.8" height="8.6" fill="#eee"/>
<circle cx="660.8" cy="407.6" r="2.1" fill="#e0303a"/>
<path d="M668,404.4 h1.6 l2.4,-2.2 v7.6 l-2.4,-2.2 h-1.6 z" fill="#f4f4f4"/>
<path d="M673.4,403.6 q1.4,2.2 0,4.4" stroke="#d8e4f0" stroke-width="0.7" fill="none"/>
<path d="M681.6,409.4 v-1.4 h1.2 v1.4 z M683.6,409.4 v-2.8 h1.2 v2.8 z M685.6,409.4 v-4.4 h1.2 v4.4 z M687.6,409.4 v-6.4 h1.2 v6.4 z" fill="#f4f4f4"/>
</g>
</g>
</svg>

<span class="t" style="left:11.5px;top:0.7px;font-size:6.44px;color:#111;text-shadow:0 0 2px #fff,0 0 3px #fff,0 0 4px #fff">Panopto</span>
<span class="t" style="left:33.5px;top:19.8px;font-size:7.96px;color:#fff">Create New Recording</span>
<span class="t" style="left:164.3px;top:19.8px;font-size:7.49px;color:#46525e">Manage Recordings</span>
<span class="t" style="left:287px;top:19.8px;font-size:7.19px;color:#46525e">Settings</span>
<span class="t" style="right:7px;top:15.0px;font-size:6.28px;color:#e8eaec">unified\cbarrett8495</span>
<span class="t" style="right:7px;top:24.3px;font-size:6.25px;color:#fff;font-weight:bold">Sign out</span>
<span class="t" style="left:100.5px;top:45.5px;font-size:6.51px;color:#e0203a;font-weight:bold">Starting Devices</span>
<span class="t" style="left:100.5px;top:64.5px;font-size:6.70px;color:#444">Folder</span>
<span class="t" style="left:100.5px;top:79.8px;font-size:6.74px;color:#444">Name</span>
<span class="t" style="left:139px;top:64.5px;font-size:6.83px;color:#444">VWCC Spring 2020 - Spring 2020 MTH 132 - V1 Business Mathematics</span>
<span class="t" style="left:139px;top:79.8px;font-size:6.77px;color:#444">Chapter 14</span>
<span class="t" style="left:-71px;width:200px;text-align:center;top:81.0px;font-size:5.83px;color:#d4d4d4">Stop</span>
<span class="t" style="left:708px;top:45.0px;font-size:6.46px;color:#dcdcdc">Webcast</span>
<span class="t" style="left:605.5px;width:200px;text-align:center;top:80.0px;font-size:6.35px;color:#b4d0e6">Join Session</span>
<span class="t" style="left:10.4px;top:105.5px;font-size:6.90px;color:#444">Primary Sources</span>
<span class="t" style="left:248px;top:104.5px;font-size:6.77px;color:#444">Main Screen</span>
<span class="t" style="left:196.5px;width:200px;text-align:center;top:104.8px;font-size:7.60px;color:#666">✕</span>
<span class="t" style="left:10.4px;top:237.8px;font-size:6.97px;color:#444">Video</span>
<span class="t" style="left:10.4px;top:254.5px;font-size:6.92px;color:#444">Audio</span>
<span class="t" style="left:10.4px;top:270.5px;font-size:6.90px;color:#444">Quality</span>
<span class="t" style="left:37px;top:237.8px;font-size:6.83px;color:#9a9a9a">HD Pro Webcam C920</span>
<span class="t" style="left:37px;top:254.5px;font-size:6.90px;color:#9a9a9a">Microphone (HD Pro Webcam C920)</span>
<span class="t" style="left:37px;top:270.5px;font-size:7.05px;color:#9a9a9a">High</span>
<span class="t" style="left:32px;top:289.3px;font-size:6.54px;color:#dadada">Capture Computer Audio</span>
<span class="t" style="left:10.4px;top:310.2px;font-size:6.42px;color:#333;font-weight:bold">Secondary Sources</span>
<span class="t" style="left:24.2px;top:323.0px;font-size:6.93px;color:#444">Capture PowerPoint</span>
<span class="t" style="left:24.2px;top:335.1px;font-size:6.82px;color:#444">Capture Main Screen</span>
<span class="t" style="left:21px;width:200px;text-align:center;top:351.5px;font-size:6.97px;color:#fff">Add Another Video Source</span>
<span class="t" style="left:264px;top:357.1px;font-size:6.92px;color:#fff">Enable screen capture preview</span>
<span class="t" style="left:245.7px;top:376.1px;font-size:6.77px;color:#555">Resolution</span>
<span class="t" style="left:286.8px;top:376.1px;font-size:6.68px;color:#aaa">1280 x 1024</span>
<span class="t" style="left:342px;top:376.1px;font-size:6.37px;color:#555">fps</span>
<span class="t" style="left:402.7px;top:376.1px;font-size:6.27px;color:#555">8</span>
<span class="t" style="left:419px;top:376.1px;font-size:6.62px;color:#555">kbps</span>
<span class="t" style="left:485px;top:376.1px;font-size:6.41px;color:#555">340</span>
<span class="t" style="left:613px;width:200px;text-align:center;top:397.1px;font-size:6.19px;color:#fff">12:27 PM</span>
<span class="t" style="left:613px;width:200px;text-align:center;top:406.3px;font-size:6.29px;color:#fff">4/20/2020</span>
<div class="nest"><div class="screen">
<div class="titlebar"></div>
<div class="b navbar"></div>
<div class="b tab"></div>
<div class="b" style="left:0;top:36px;width:740px;height:358px;background:#fff"></div>
<div class="b inp" style="left:135px;top:62px;width:600px;height:14px"></div>
<div class="b inp" style="left:135px;top:78px;width:538px;height:13px"></div>
<div class="b" style="left:676px;top:78px;width:59px;height:13px;background:#d3e6f3"></div>
<div class="b" style="left:694px;top:44px;width:10px;height:10px;background:#cfcfcf"></div>
<div class="b panel" style="left:7px;top:102px;width:228px;height:199px"></div>
<div class="b panel" style="left:7px;top:307px;width:228px;height:81px"></div>
<div class="b panel" style="left:243px;top:102px;width:492px;height:286px"></div>
<div class="b" style="left:243px;top:115.4px;width:492px;height:256.6px;background:#434343;border-top:1.2px solid #c9dcea"></div><div class="b" style="left:243px;top:115.4px;width:62px;height:1.3px;background:#4a9fdc"></div>
<div class="b inp2" style="left:35px;top:236px;width:198.5px;height:12px"></div>
<div class="b inp2" style="left:35px;top:253px;width:198.5px;height:12px"></div>
<div class="b inp2" style="left:35px;top:269px;width:198.5px;height:12px"></div>
<div class="b" style="left:11px;top:288px;width:10px;height:10px;background:#d0d0d0"></div>
<div class="b" style="left:10px;top:323px;width:10px;height:10px;background:#fff;border:0.5px solid #ccc"></div>
<div class="b" style="left:10px;top:335px;width:10px;height:10px;background:#3b94d0"></div>
<div class="b" style="left:10px;top:347.5px;width:221.8px;height:16.5px;background:#4397cd"></div>
<div class="b" style="left:250px;top:357px;width:10px;height:10px;background:#3b94d0"></div>
<div class="b inp2" style="left:284px;top:375.5px;width:52px;height:10px"></div>
<div class="taskbar"></div>
<svg style="left:10px;top:118px" width="204" height="113" viewBox="10 118 204 113">
<defs>
<linearGradient id="wallg" x1="0" y1="0" x2="1" y2="0"><stop offset="0" stop-color="#2f373c"/><stop offset="0.3" stop-color="#454f54"/><stop offset="0.55" stop-color="#3d464b"/><stop offset="1" stop-color="#353b40"/></linearGradient>
<linearGradient id="wallv" x1="0" y1="0" x2="0" y2="1"><stop offset="0" stop-color="#000" stop-opacity="0.28"/><stop offset="0.55" stop-color="#000" stop-opacity="0"/><stop offset="1" stop-color="#fff" stop-opacity="0.04"/></linearGradient>
<filter id="bl" x="-5%" y="-5%" width="110%" height="110%"><feGaussianBlur stdDeviation="0.7"/></filter>
<filter id="bl2" x="-5%" y="-5%" width="110%" height="110%"><feGaussianBlur stdDeviation="0.45"/></filter>
<clipPath id="vc"><rect x="10" y="118" width="204" height="113"/></clipPath>
<clipPath id="shirtc"><path d="M45,232 L50,218 L58,205 L70,194 L84,189 L128,188 L142,192 L153,202 L158,215 L161,232 Z"/></clipPath>
</defs>
<g clip-path="url(#vc)">
<rect x="10" y="118" width="204" height="113" fill="#efefef"/>
<rect x="10" y="118" width="187.5" height="68" fill="url(#wallg)"/>
<rect x="10" y="118" width="187.5" height="68" fill="url(#wallv)"/>
<rect x="10" y="186.3" width="188" height="3.2" fill="#dcdcdc"/>
<rect x="10" y="189.5" width="188" height="42" fill="#f1f1f1"/>
<rect x="197.5" y="118" width="16.5" height="113" fill="#f6f2ee"/>
<rect x="197.5" y="118" width="2.5" height="113" fill="#ebe6e1"/>
<rect x="140" y="196" width="50" height="36" fill="#f7f7f7" stroke="#e4e4e4" stroke-width="0.6"/>
<g filter="url(#bl2)">
<rect x="167.4" y="140.8" width="9" height="13.2" fill="#e9e9ee"/>
<rect x="166.6" y="154" width="10.5" height="1.3" fill="#1e262b"/>
<path d="M207.6,176.5 l-1.4,-2.4 M207.6,176.5 l1.6,-2.6 M207.6,176.5 v9" stroke="#6a5a4a" stroke-width="0.7" fill="none"/>
<path d="M205.2,186 h6.6 v2 h-1.4 v11 h-1.4 v-5 h-2.4 v2.6 h-1.4 z" fill="#7e3a2c"/>
<rect x="195" y="196" width="0.8" height="36" fill="#cfcfcf"/>
</g>
<g filter="url(#bl)">
<path d="M56.5,232 L56.8,172 Q57,163.5 65,163.5 L131,163.5 Q138.8,163.5 139,172 L140,232 Z" fill="#842a22"/>
<path d="M64.5,232 L64.5,181 Q65,174.5 72,174.5 L125,174.5 L130,232 Z" fill="#ecd9d2"/>
<path d="M56.5,200 L56.8,172 Q57,163.5 65,163.5 L75,163.5 L75,167 L66,167.5 Q60.5,168 60.3,174 L60,200 Z" fill="#a03a2e"/>
<!-- shirt -->
<path d="M45,232 L50,218 L58,205 L70,194 L84,189 L128,188 L142,192 L153,202 L158,215 L161,232 Z" fill="#ebebf1"/>
<g clip-path="url(#shirtc)" fill="none" stroke="#4a5a7e" stroke-width="4.6">
<path d="M50,207 Q62,196.5 78,195 L96,197.5"/>
<path d="M44,216.5 Q60,206 78,204.5 L98,207"/>
<path d="M40,226 Q58,215.5 78,214 L101,216.5"/>
<path d="M38,235 Q58,225 80,223.5 L104,226.5"/>
<path d="M114,196.5 L132,193.5 Q146,196 160,208"/>
<path d="M112,205.5 L132,202.5 Q146,205 164,218"/>
<path d="M110,214.5 L132,211.5 Q148,214.5 166,228"/>
<path d="M108,224 L132,221 Q150,224 168,238"/>
<path d="M106,233.5 L132,230.5 Q150,233 166,244"/>
</g>
<!-- neck & V -->
<path d="M97.5,180 L97,196 L103,212 L107,200 L116,195 L116.5,180 Z" fill="#c39783"/>
<path d="M99,196 L103,214 L106.5,222 L108.5,210 L112,196 Z" fill="#c98c80"/>
<!-- hair back -->
<path d="M106,129.8 Q94,130 89.5,140 Q86.5,148 86,160 Q85,175 80,188 Q73.5,200 72,208 Q71.5,216 77,218.5 Q84,219.5 88.5,212 Q93,203 96,193 L97,182 L116,182 L117,194 Q119,204 123,211 Q127,216.5 131.5,214.5 Q136.5,211 136.8,203 Q137,196 133.5,188 Q130.5,177 129.5,163 Q128.5,150 125,141 Q120,129.6 106,129.8 Z" fill="#36241c"/>
<!-- face -->
<path d="M106,138 Q96,138.5 92.5,146 Q90.2,154 91,164 Q92.4,174 98,181 Q102.5,186 106.5,186 Q111,186 115.5,181 Q121,173 122.2,164 Q123,153 119.8,146 Q116,138.5 106,138 Z" fill="#d0a996"/>
<ellipse cx="98" cy="170" rx="4" ry="3" fill="#d08a80" opacity="0.35"/>
<ellipse cx="116" cy="170" rx="4" ry="3" fill="#d08a80" opacity="0.3"/>
<!-- hairline: part on left, sweeping right -->
<path d="M95,144.5 Q100.5,139.6 108,140 Q116,141.2 120,148 Q122.4,153 122.4,161 L125,150 Q122,136 108,133.5 Q96,133 92.2,141 Q90.4,147 90.6,158 Q91.4,149.5 95,144.5 Z" fill="#36241c"/>
<path d="M92.5,176 Q95,181 100,185 L97,187 L92,180 Z" fill="#a87c68" opacity="0.5"/>
<path d="M121,176 Q118,181 113,185 L116.5,187 L121.5,180 Z" fill="#a87c68" opacity="0.35"/>
<!-- hair strands front over shoulders -->
<path d="M97,182 Q95,196 90,206 Q86,214 80,217 Q88,219 93,212 Q99,203 100,192 Z" fill="#36241c"/>
<path d="M116,182 Q117,196 121,206 Q124,213 129,216 Q120,221 113,214 Q108,206 111,192 Z" fill="#36241c"/>
<g fill="none" stroke="#5e4032" stroke-width="2.2" opacity="0.55" stroke-linecap="round">
<path d="M94,138 Q88,150 87.5,166 Q86,180 81,192 Q76,202 77,211"/>
<path d="M98,133 Q106,131 114,134"/>
<path d="M120,139 Q125.5,152 126,166 Q127.5,180 131,191 Q134,200 132,209"/>
<path d="M92,192 Q88,204 84,212"/>
<path d="M121,196 Q124,205 128,210"/>
</g>
</g>
<g filter="url(#bl2)">
<g fill="none" stroke="#6a544c" stroke-width="0.55">
<rect x="94.3" y="157.3" width="10" height="7.4" rx="2"/>
<rect x="109.3" y="157.3" width="10" height="7.4" rx="2"/>
<path d="M104.3,160 Q106.8,158.8 109.3,160"/>
</g>
<ellipse cx="99.5" cy="160.6" rx="2" ry="1" fill="#3a2a26"/>
<ellipse cx="114" cy="160.6" rx="2" ry="1" fill="#3a2a26"/>
<path d="M96,156.2 Q99.5,154.8 103,156" stroke="#5a3e32" stroke-width="0.8" fill="none"/>
<path d="M110.5,156 Q114,154.8 117.5,156.2" stroke="#5a3e32" stroke-width="0.8" fill="none"/>
<path d="M105,169.5 Q106.8,171 108.6,169.5" stroke="#a87c68" stroke-width="0.8" fill="none"/>
<path d="M101.8,176.3 Q106.8,178 112,176" stroke="#9a5a52" stroke-width="1.1" fill="none"/>
</g>
</g>
</svg>

<svg style="left:0;top:0" width="740" height="416" viewBox="0 0 740 416">
<defs>
<filter id="b1" x="-20%" y="-20%" width="140%" height="140%"><feGaussianBlur stdDeviation="1.2"/></filter>
<filter id="b05" x="-20%" y="-20%" width="140%" height="140%"><feGaussianBlur stdDeviation="0.4"/></filter>
<linearGradient id="tbg" x1="0" y1="0" x2="1" y2="0">
<stop offset="0" stop-color="#c9d8e6"/><stop offset="0.05" stop-color="#9db6d0"/><stop offset="0.09" stop-color="#4b79b4"/><stop offset="0.3" stop-color="#2f66ad"/><stop offset="0.6" stop-color="#2b62a8"/><stop offset="0.76" stop-color="#24528f"/><stop offset="1" stop-color="#234f88"/>
</linearGradient>
<radialGradient id="orb" cx="0.5" cy="0.4" r="0.6"><stop offset="0" stop-color="#5aa0d8"/><stop offset="0.7" stop-color="#1f5a9a"/><stop offset="1" stop-color="#173f78"/></radialGradient>
<linearGradient id="tbtn1" x1="0" y1="0" x2="0" y2="1"><stop offset="0" stop-color="#c4e2f0"/><stop offset="0.5" stop-color="#9ccfe8"/><stop offset="1" stop-color="#84c4e4"/></linearGradient>
<linearGradient id="tbtn2" x1="0" y1="0" x2="0" y2="1"><stop offset="0" stop-color="#86c2e2"/><stop offset="0.5" stop-color="#5aa9d4"/><stop offset="1" stop-color="#4a9fd0"/></linearGradient>
<clipPath id="tbc"><rect x="0" y="0" width="740" height="11"/></clipPath>
</defs>
<!-- title bar -->
<g clip-path="url(#tbc)">
<rect x="0" y="0" width="740" height="11" fill="url(#tbg)"/>
<g filter="url(#b1)" fill="#cfe0f0">
<rect x="50" y="4" width="22" height="8" opacity="0.85"/>
<rect x="90" y="4" width="20" height="8" opacity="0.8"/>
<rect x="135" y="4" width="14" height="7" opacity="0.6"/>
<rect x="217" y="6" width="14" height="6" fill="#5aa070" opacity="0.8"/>
<rect x="178" y="5" width="10" height="6" fill="#c04060" opacity="0.7"/>
<rect x="262" y="5" width="10" height="6" fill="#8090a8" opacity="0.6"/>
<rect x="293" y="4" width="22" height="8" opacity="0.9"/>
<rect x="338" y="5" width="16" height="7" opacity="0.7"/>
<rect x="376" y="4" width="16" height="8" opacity="0.85"/>
<rect x="418" y="4" width="14" height="8" opacity="0.8"/>
<rect x="458" y="4" width="18" height="8" opacity="0.9"/>
<rect x="580" y="4" width="14" height="8" opacity="0.45"/>
<rect x="620" y="8" width="14" height="4" opacity="0.4"/>
<rect x="545" y="3" width="12" height="6" fill="#a06070" opacity="0.4"/>
</g>
<ellipse cx="24" cy="5.5" rx="22" ry="6" fill="#e4edf5" filter="url(#b1)" opacity="0.9"/>
<!-- panopto tiny icon -->
<path d="M5.5,1.2 L9.3,8.8 L1.7,8.8 Z" fill="#3a9a3c"/>
<circle cx="5.5" cy="6.2" r="1.3" fill="#d8f0d0"/>
<!-- window buttons -->
<rect x="683" y="-1" width="28.5" height="9" rx="1.5" fill="#7488a8" stroke="#b8c4d4" stroke-width="0.5" opacity="0.95"/>
<rect x="711.5" y="-1" width="26.5" height="9" rx="1.5" fill="#c83c3a" stroke="#e0b0b0" stroke-width="0.5"/><rect x="712" y="0" width="25.5" height="3" fill="#e08888" opacity="0.6"/>
<line x1="697" y1="0" x2="697" y2="8" stroke="#c8d4e4" stroke-width="0.4"/>
<rect x="688" y="4.3" width="5.5" height="1.6" fill="#fff"/>
<rect x="701" y="2" width="5.2" height="4" fill="none" stroke="#fff" stroke-width="1.1"/>
<path d="M722.3,2 L726.7,6 M726.7,2 L722.3,6" stroke="#fff" stroke-width="1.3"/>
</g>
<!-- nav icons -->
<circle cx="18" cy="24.2" r="6" fill="none" stroke="#fff" stroke-width="1.2"/>
<rect x="14.6" y="22" width="5" height="4.4" rx="0.8" fill="#fff"/>
<path d="M19.9,24.2 L22,22.4 V26 Z" fill="#fff"/>
<g stroke="#3c4854" fill="none" stroke-width="0.8">
<circle cx="152" cy="24.2" r="7.2"/>
<path d="M147.5,21.6 H156.5 M147.5,24.2 H156.5 M147.5,26.8 H156.5" stroke-width="0.9"/>
<circle cx="272.5" cy="24.2" r="7.2"/>
<circle cx="272.5" cy="24.2" r="2.6" stroke-width="1.6"/>
<path d="M272.5,20 v-1.4 M272.5,28.4 v1.4 M268.3,24.2 h-1.4 M276.7,24.2 h1.4" stroke-width="1.2"/>
</g>
<!-- stop button -->
<circle cx="28.8" cy="62" r="17" fill="#fff" stroke="#e2e2e2" stroke-width="0.8"/>
<rect x="20.8" y="54" width="16" height="16" fill="#f3a9b1"/>
<!-- cursor -->
<path d="M23.3,59.3 V68.6 L25.4,66.7 L26.9,70 L28.2,69.4 L26.8,66.2 L29.6,66 Z" fill="#fff" stroke="#111" stroke-width="0.6" stroke-linejoin="round"/>
<!-- info icons -->
<circle cx="69.2" cy="110" r="3.2" fill="#3d8fd0"/>
<circle cx="69.2" cy="110" r="3.2" fill="none" stroke="#8cc0e8" stroke-width="0.5"/>
<rect x="68.8" y="109.4" width="0.9" height="2.3" fill="#fff"/><rect x="68.8" y="107.9" width="0.9" height="0.9" fill="#fff"/>
<circle cx="725.7" cy="380.5" r="3.4" fill="#3d8fd0"/>
<rect x="725.3" y="380" width="0.9" height="2.4" fill="#fff"/><rect x="725.3" y="378.4" width="0.9" height="0.9" fill="#fff"/>
<!-- meter -->
<rect x="215" y="118" width="7.4" height="113" fill="#e8e8e8"/>
<rect x="215.4" y="118" width="6.6" height="20.5" fill="#f0c6cc"/>
<rect x="215.4" y="138.5" width="6.6" height="23.5" fill="#f0ebb6"/>
<rect x="215.4" y="162" width="6.6" height="69" fill="#bdeac0"/>
<g stroke="#e8e8e8" stroke-width="0.6">
<path d="M218.7,118 V231"/>
<path d="M215,121.2 h8 M215,124.4 h8 M215,127.6 h8 M215,130.8 h8 M215,134 h8 M215,137.2 h8 M215,140.4 h8 M215,143.6 h8 M215,146.8 h8 M215,150 h8 M215,153.2 h8 M215,156.4 h8 M215,159.6 h8 M215,162.8 h8 M215,166 h8 M215,169.2 h8 M215,172.4 h8 M215,175.6 h8 M215,178.8 h8 M215,182 h8 M215,185.2 h8 M215,188.4 h8 M215,191.6 h8 M215,194.8 h8 M215,198 h8 M215,201.2 h8 M215,204.4 h8 M215,207.6 h8 M215,210.8 h8 M215,214 h8 M215,217.2 h8 M215,220.4 h8 M215,223.6 h8 M215,226.8 h8"/>
</g>
<!-- volume slider -->
<rect x="227.1" y="118" width="1" height="70" fill="#97a5b0"/>
<rect x="227.1" y="188" width="1" height="43" fill="#3b8fd0"/>
<circle cx="227.6" cy="188.2" r="3.3" fill="#3a8fd0"/>
<!-- checkmarks -->
<path d="M12,340 L14.3,342.6 L18.4,337" stroke="#fff" stroke-width="1.1" fill="none"/>
<path d="M252,362 L254.3,364.6 L258.4,359" stroke="#fff" stroke-width="1.1" fill="none"/>
<!-- sliders -->
<rect x="356" y="380.3" width="41" height="0.9" fill="#7a7a7a"/>
<rect x="362.5" y="377.4" width="4.6" height="6.6" rx="0.8" fill="#d0d0d0" stroke="#aaa" stroke-width="0.4"/>
<rect x="438.4" y="380.3" width="40" height="0.9" fill="#aaa"/>
<rect x="439" y="377.4" width="4.6" height="6.6" rx="0.8" fill="#dedede" stroke="#c4c4c4" stroke-width="0.4"/>
<!-- taskbar -->
<g>
<rect x="0" y="394" width="740" height="22" fill="none"/>
<path d="M480,394 Q520,398 545,416 L560,416 Q530,398 492,394 Z" fill="#8cc4ec" opacity="0.55" filter="url(#b1)"/>
<rect x="0" y="393.6" width="740" height="0.8" fill="#9cc8e8" opacity="0.7"/>
<rect x="734" y="394" width="6" height="22" fill="#3d6a9e" opacity="0.8"/>
<!-- start orb -->
<circle cx="14.3" cy="405.3" r="9.3" fill="url(#orb)"/>
<circle cx="14.3" cy="405.3" r="9.3" fill="none" stroke="#8cc4e4" stroke-width="0.7" opacity="0.8"/>
<g filter="url(#b05)" transform="translate(14.3 405.5) scale(1.18) translate(-13.9 -405.5)">
<path d="M9.6,400.8 Q11.8,399.6 13.8,400.8 L13.2,404.8 Q11.2,403.8 9,404.9 Z" fill="#e8502c"/>
<path d="M14.9,401.2 Q17,402.4 19.2,401.2 L18.6,405.2 Q16.4,406.4 14.3,405.2 Z" fill="#7cc242"/>
<path d="M8.8,405.9 Q11,404.8 13,405.9 L12.4,409.9 Q10.4,408.9 8.2,410 Z" fill="#3ca0e8"/>
<path d="M14.1,406.3 Q16.2,407.5 18.4,406.3 L17.8,410.3 Q15.6,411.5 13.5,410.3 Z" fill="#f8cc3c"/>
</g>
<!-- IE -->
<g filter="url(#b05)">
<text x="40.6" y="412.6" font-family="Liberation Sans, sans-serif" font-weight="bold" font-size="24" fill="#8fe0fb">e</text>
<path d="M41.6,411.4 Q38.6,405 45,399.6 Q50.6,395.4 55.4,397" stroke="#e4d44c" stroke-width="1.7" fill="none"/>
<path d="M51.4,396.8 Q54.2,395.6 55.6,397.6" stroke="#8ccc5c" stroke-width="1.8" fill="none"/>
</g>
<!-- folder -->
<g filter="url(#b05)">
<path d="M74,400 L76,398.6 L82,398.6 L83,400 L90,400 L90,412.3 L74,412.3 Z" fill="#f3e6a2"/>
<rect x="75.5" y="402" width="13" height="4" fill="#fbf4c8"/>
<rect x="75" y="407" width="14.5" height="4.6" fill="#a8d4e2"/>
<rect x="80" y="400" width="1.6" height="1.2" fill="#444"/><rect x="84" y="400.4" width="1.6" height="1.2" fill="#444"/>
</g>
<!-- media player -->
<g filter="url(#b05)">
<rect x="108.4" y="399.5" width="11.4" height="12.5" fill="#86bfe6"/>
<circle cx="114" cy="405.9" r="4.9" fill="#e0741e"/>
<path d="M112.4,402.9 L117,405.9 L112.4,408.9 Z" fill="#fff"/>
</g>
<!-- chrome -->
<g filter="url(#b05)">
<circle cx="149.5" cy="405.5" r="8" fill="#e6443a"/>
<path d="M149.5,405.5 L142.6,401.5 A8,8 0 0 0 145.5,412.4 Z M149.5,405.5 L145.5,412.4 A8,8 0 0 0 149.6,413.5 L153.5,406.6Z" fill="#34a853"/>
<path d="M149.5,405.5 L157.4,404 A8,8 0 0 1 149.6,413.5 Z" fill="#f8c02c"/>
<circle cx="149.5" cy="405.5" r="3.7" fill="#fff"/>
<circle cx="149.5" cy="405.5" r="2.9" fill="#4a88e8"/>
</g>
<!-- panopto button -->
<rect x="167" y="394.3" width="31" height="22" fill="url(#tbtn1)" stroke="#d8ecf6" stroke-width="0.6"/>
<g filter="url(#b05)" fill="#3c9c40">
<path d="M183.3,397.2 L187.6,399.6 L186,403.2 L180.2,400.6 Z"/>
<path d="M179.2,401.6 L180.8,407.2 L178.4,411.8 L175.8,407 Z" fill="#2e8c3a"/>
<path d="M188.6,403 L191.2,408 L188,412.4 L181,412.4 L180.6,409 L186.6,408.4 Z" fill="#4cac48"/>
<path d="M182,403.4 L186.6,405.9 L182,408.4 Z" fill="#e8f6e8"/>
</g>
<!-- third button -->
<rect x="200.8" y="394.3" width="31.5" height="22" fill="url(#tbtn2)" stroke="#a8d4ec" stroke-width="0.6"/>
<g filter="url(#b05)">
<rect x="208" y="398" width="11.5" height="10.5" fill="#f6f6f0" stroke="#2c3c50" stroke-width="0.7"/>
<rect x="208.6" y="400.4" width="7" height="2" fill="#f0d848"/>
<rect x="208.6" y="403.6" width="6" height="2" fill="#4a78c8"/>
<path d="M215,401 L223.6,410.6 L221.8,411.6 L219.4,408.4 L217,410.4 Z" fill="#fff" stroke="#2c3c50" stroke-width="0.6"/>
</g>
<!-- tray -->
<path d="M632.2,406.6 L634.6,406.6 L633.4,405 Z" fill="#fff"/>
<g filter="url(#b05)">
<rect x="642.6" y="401.6" width="5" height="7.6" fill="#f0f0f0"/><rect x="644" y="400.6" width="2.2" height="1.4" fill="#ddd"/>
<path d="M655.6,401.4 h5 v4 h-5 z" fill="#f4f4f4"/><rect x="655.4" y="401" width="0.8" height="8.6" fill="#eee"/>
<circle cx="660.8" cy="407.6" r="2.1" fill="#e0303a"/>
<path d="M668,404.4 h1.6 l2.4,-2.2 v7.6 l-2.4,-2.2 h-1.6 z" fill="#f4f4f4"/>
<path d="M673.4,403.6 q1.4,2.2 0,4.4" stroke="#d8e4f0" stroke-width="0.7" fill="none"/>
<path d="M681.6,409.4 v-1.4 h1.2 v1.4 z M683.6,409.4 v-2.8 h1.2 v2.8 z M685.6,409.4 v-4.4 h1.2 v4.4 z M687.6,409.4 v-6.4 h1.2 v6.4 z" fill="#f4f4f4"/>
</g>
</g>
</svg>

<span class="t" style="left:11.5px;top:0.7px;font-size:6.44px;color:#111;text-shadow:0 0 2px #fff,0 0 3px #fff,0 0 4px #fff">Panopto</span>
<span class="t" style="left:33.5px;top:19.8px;font-size:7.96px;color:#fff">Create New Recording</span>
<span class="t" style="left:164.3px;top:19.8px;font-size:7.49px;color:#46525e">Manage Recordings</span>
<span class="t" style="left:287px;top:19.8px;font-size:7.19px;color:#46525e">Settings</span>
<span class="t" style="right:7px;top:15.0px;font-size:6.28px;color:#e8eaec">unified\cbarrett8495</span>
<span class="t" style="right:7px;top:24.3px;font-size:6.25px;color:#fff;font-weight:bold">Sign out</span>
<span class="t" style="left:100.5px;top:45.5px;font-size:6.51px;color:#e0203a;font-weight:bold">Starting Devices</span>
<span class="t" style="left:100.5px;top:64.5px;font-size:6.70px;color:#444">Folder</span>
<span class="t" style="left:100.5px;top:79.8px;font-size:6.74px;color:#444">Name</span>
<span class="t" style="left:139px;top:64.5px;font-size:6.83px;color:#444">VWCC Spring 2020 - Spring 2020 MTH 132 - V1 Business Mathematics</span>
<span class="t" style="left:139px;top:79.8px;font-size:6.77px;color:#444">Chapter 14</span>
<span class="t" style="left:-71px;width:200px;text-align:center;top:81.0px;font-size:5.83px;color:#d4d4d4">Stop</span>
<span class="t" style="left:708px;top:45.0px;font-size:6.46px;color:#dcdcdc">Webcast</span>
<span class="t" style="left:605.5px;width:200px;text-align:center;top:80.0px;font-size:6.35px;color:#b4d0e6">Join Session</span>
<span class="t" style="left:10.4px;top:105.5px;font-size:6.90px;color:#444">Primary Sources</span>
<span class="t" style="left:248px;top:104.5px;font-size:6.77px;color:#444">Main Screen</span>
<span class="t" style="left:196.5px;width:200px;text-align:center;top:104.8px;font-size:7.60px;color:#666">✕</span>
<span class="t" style="left:10.4px;top:237.8px;font-size:6.97px;color:#444">Video</span>
<span class="t" style="left:10.4px;top:254.5px;font-size:6.92px;color:#444">Audio</span>
<span class="t" style="left:10.4px;top:270.5px;font-size:6.90px;color:#444">Quality</span>
<span class="t" style="left:37px;top:237.8px;font-size:6.83px;color:#9a9a9a">HD Pro Webcam C920</span>
<span class="t" style="left:37px;top:254.5px;font-size:6.90px;color:#9a9a9a">Microphone (HD Pro Webcam C920)</span>
<span class="t" style="left:37px;top:270.5px;font-size:7.05px;color:#9a9a9a">High</span>
<span class="t" style="left:32px;top:289.3px;font-size:6.54px;color:#dadada">Capture Computer Audio</span>
<span class="t" style="left:10.4px;top:310.2px;font-size:6.42px;color:#333;font-weight:bold">Secondary Sources</span>
<span class="t" style="left:24.2px;top:323.0px;font-size:6.93px;color:#444">Capture PowerPoint</span>
<span class="t" style="left:24.2px;top:335.1px;font-size:6.82px;color:#444">Capture Main Screen</span>
<span class="t" style="left:21px;width:200px;text-align:center;top:351.5px;font-size:6.97px;color:#fff">Add Another Video Source</span>
<span class="t" style="left:264px;top:357.1px;font-size:6.92px;color:#fff">Enable screen capture preview</span>
<span class="t" style="left:245.7px;top:376.1px;font-size:6.77px;color:#555">Resolution</span>
<span class="t" style="left:286.8px;top:376.1px;font-size:6.68px;color:#aaa">1280 x 1024</span>
<span class="t" style="left:342px;top:376.1px;font-size:6.37px;color:#555">fps</span>
<span class="t" style="left:402.7px;top:376.1px;font-size:6.27px;color:#555">8</span>
<span class="t" style="left:419px;top:376.1px;font-size:6.62px;color:#555">kbps</span>
<span class="t" style="left:485px;top:376.1px;font-size:6.41px;color:#555">340</span>
<span class="t" style="left:613px;width:200px;text-align:center;top:397.1px;font-size:6.19px;color:#fff">12:27 PM</span>
<span class="t" style="left:613px;width:200px;text-align:center;top:406.3px;font-size:6.29px;color:#fff">4/20/2020</span>
<div class="nest"><div class="screen">
<div class="titlebar"></div>
<div class="b navbar"></div>
<div class="b tab"></div>
<div class="b" style="left:0;top:36px;width:740px;height:358px;background:#fff"></div>
<div class="b inp" style="left:135px;top:62px;width:600px;height:14px"></div>
<div class="b inp" style="left:135px;top:78px;width:538px;height:13px"></div>
<div class="b" style="left:676px;top:78px;width:59px;height:13px;background:#d3e6f3"></div>
<div class="b" style="left:694px;top:44px;width:10px;height:10px;background:#cfcfcf"></div>
<div class="b panel" style="left:7px;top:102px;width:228px;height:199px"></div>
<div class="b panel" style="left:7px;top:307px;width:228px;height:81px"></div>
<div class="b panel" style="left:243px;top:102px;width:492px;height:286px"></div>
<div class="b" style="left:243px;top:115.4px;width:492px;height:256.6px;background:#434343;border-top:1.2px solid #c9dcea"></div><div class="b" style="left:243px;top:115.4px;width:62px;height:1.3px;background:#4a9fdc"></div>
<div class="b inp2" style="left:35px;top:236px;width:198.5px;height:12px"></div>
<div class="b inp2" style="left:35px;top:253px;width:198.5px;height:12px"></div>
<div class="b inp2" style="left:35px;top:269px;width:198.5px;height:12px"></div>
<div class="b" style="left:11px;top:288px;width:10px;height:10px;background:#d0d0d0"></div>
<div class="b" style="left:10px;top:323px;width:10px;height:10px;background:#fff;border:0.5px solid #ccc"></div>
<div class="b" style="left:10px;top:335px;width:10px;height:10px;background:#3b94d0"></div>
<div class="b" style="left:10px;top:347.5px;width:221.8px;height:16.5px;background:#4397cd"></div>
<div class="b" style="left:250px;top:357px;width:10px;height:10px;background:#3b94d0"></div>
<div class="b inp2" style="left:284px;top:375.5px;width:52px;height:10px"></div>
<div class="taskbar"></div>
<svg style="left:10px;top:118px" width="204" height="113" viewBox="10 118 204 113">
<defs>
<linearGradient id="wallg" x1="0" y1="0" x2="1" y2="0"><stop offset="0" stop-color="#2f373c"/><stop offset="0.3" stop-color="#454f54"/><stop offset="0.55" stop-color="#3d464b"/><stop offset="1" stop-color="#353b40"/></linearGradient>
<linearGradient id="wallv" x1="0" y1="0" x2="0" y2="1"><stop offset="0" stop-color="#000" stop-opacity="0.28"/><stop offset="0.55" stop-color="#000" stop-opacity="0"/><stop offset="1" stop-color="#fff" stop-opacity="0.04"/></linearGradient>
<filter id="bl" x="-5%" y="-5%" width="110%" height="110%"><feGaussianBlur stdDeviation="0.7"/></filter>
<filter id="bl2" x="-5%" y="-5%" width="110%" height="110%"><feGaussianBlur stdDeviation="0.45"/></filter>
<clipPath id="vc"><rect x="10" y="118" width="204" height="113"/></clipPath>
<clipPath id="shirtc"><path d="M45,232 L50,218 L58,205 L70,194 L84,189 L128,188 L142,192 L153,202 L158,215 L161,232 Z"/></clipPath>
</defs>
<g clip-path="url(#vc)">
<rect x="10" y="118" width="204" height="113" fill="#efefef"/>
<rect x="10" y="118" width="187.5" height="68" fill="url(#wallg)"/>
<rect x="10" y="118" width="187.5" height="68" fill="url(#wallv)"/>
<rect x="10" y="186.3" width="188" height="3.2" fill="#dcdcdc"/>
<rect x="10" y="189.5" width="188" height="42" fill="#f1f1f1"/>
<rect x="197.5" y="118" width="16.5" height="113" fill="#f6f2ee"/>
<rect x="197.5" y="118" width="2.5" height="113" fill="#ebe6e1"/>
<rect x="140" y="196" width="50" height="36" fill="#f7f7f7" stroke="#e4e4e4" stroke-width="0.6"/>
<g filter="url(#bl2)">
<rect x="167.4" y="140.8" width="9" height="13.2" fill="#e9e9ee"/>
<rect x="166.6" y="154" width="10.5" height="1.3" fill="#1e262b"/>
<path d="M207.6,176.5 l-1.4,-2.4 M207.6,176.5 l1.6,-2.6 M207.6,176.5 v9" stroke="#6a5a4a" stroke-width="0.7" fill="none"/>
<path d="M205.2,186 h6.6 v2 h-1.4 v11 h-1.4 v-5 h-2.4 v2.6 h-1.4 z" fill="#7e3a2c"/>
<rect x="195" y="196" width="0.8" height="36" fill="#cfcfcf"/>
</g>
<g filter="url(#bl)">
<path d="M56.5,232 L56.8,172 Q57,163.5 65,163.5 L131,163.5 Q138.8,163.5 139,172 L140,232 Z" fill="#842a22"/>
<path d="M64.5,232 L64.5,181 Q65,174.5 72,174.5 L125,174.5 L130,232 Z" fill="#ecd9d2"/>
<path d="M56.5,200 L56.8,172 Q57,163.5 65,163.5 L75,163.5 L75,167 L66,167.5 Q60.5,168 60.3,174 L60,200 Z" fill="#a03a2e"/>
<!-- shirt -->
<path d="M45,232 L50,218 L58,205 L70,194 L84,189 L128,188 L142,192 L153,202 L158,215 L161,232 Z" fill="#ebebf1"/>
<g clip-path="url(#shirtc)" fill="none" stroke="#4a5a7e" stroke-width="4.6">
<path d="M50,207 Q62,196.5 78,195 L96,197.5"/>
<path d="M44,216.5 Q60,206 78,204.5 L98,207"/>
<path d="M40,226 Q58,215.5 78,214 L101,216.5"/>
<path d="M38,235 Q58,225 80,223.5 L104,226.5"/>
<path d="M114,196.5 L132,193.5 Q146,196 160,208"/>
<path d="M112,205.5 L132,202.5 Q146,205 164,218"/>
<path d="M110,214.5 L132,211.5 Q148,214.5 166,228"/>
<path d="M108,224 L132,221 Q150,224 168,238"/>
<path d="M106,233.5 L132,230.5 Q150,233 166,244"/>
</g>
<!-- neck & V -->
<path d="M97.5,180 L97,196 L103,212 L107,200 L116,195 L116.5,180 Z" fill="#c39783"/>
<path d="M99,196 L103,214 L106.5,222 L108.5,210 L112,196 Z" fill="#c98c80"/>
<!-- hair back -->
<path d="M106,129.8 Q94,130 89.5,140 Q86.5,148 86,160 Q85,175 80,188 Q73.5,200 72,208 Q71.5,216 77,218.5 Q84,219.5 88.5,212 Q93,203 96,193 L97,182 L116,182 L117,194 Q119,204 123,211 Q127,216.5 131.5,214.5 Q136.5,211 136.8,203 Q137,196 133.5,188 Q130.5,177 129.5,163 Q128.5,150 125,141 Q120,129.6 106,129.8 Z" fill="#36241c"/>
<!-- face -->
<path d="M106,138 Q96,138.5 92.5,146 Q90.2,154 91,164 Q92.4,174 98,181 Q102.5,186 106.5,186 Q111,186 115.5,181 Q121,173 122.2,164 Q123,153 119.8,146 Q116,138.5 106,138 Z" fill="#d0a996"/>
<ellipse cx="98" cy="170" rx="4" ry="3" fill="#d08a80" opacity="0.35"/>
<ellipse cx="116" cy="170" rx="4" ry="3" fill="#d08a80" opacity="0.3"/>
<!-- hairline: part on left, sweeping right -->
<path d="M95,144.5 Q100.5,139.6 108,140 Q116,141.2 120,148 Q122.4,153 122.4,161 L125,150 Q122,136 108,133.5 Q96,133 92.2,141 Q90.4,147 90.6,158 Q91.4,149.5 95,144.5 Z" fill="#36241c"/>
<path d="M92.5,176 Q95,181 100,185 L97,187 L92,180 Z" fill="#a87c68" opacity="0.5"/>
<path d="M121,176 Q118,181 113,185 L116.5,187 L121.5,180 Z" fill="#a87c68" opacity="0.35"/>
<!-- hair strands front over shoulders -->
<path d="M97,182 Q95,196 90,206 Q86,214 80,217 Q88,219 93,212 Q99,203 100,192 Z" fill="#36241c"/>
<path d="M116,182 Q117,196 121,206 Q124,213 129,216 Q120,221 113,214 Q108,206 111,192 Z" fill="#36241c"/>
<g fill="none" stroke="#5e4032" stroke-width="2.2" opacity="0.55" stroke-linecap="round">
<path d="M94,138 Q88,150 87.5,166 Q86,180 81,192 Q76,202 77,211"/>
<path d="M98,133 Q106,131 114,134"/>
<path d="M120,139 Q125.5,152 126,166 Q127.5,180 131,191 Q134,200 132,209"/>
<path d="M92,192 Q88,204 84,212"/>
<path d="M121,196 Q124,205 128,210"/>
</g>
</g>
<g filter="url(#bl2)">
<g fill="none" stroke="#6a544c" stroke-width="0.55">
<rect x="94.3" y="157.3" width="10" height="7.4" rx="2"/>
<rect x="109.3" y="157.3" width="10" height="7.4" rx="2"/>
<path d="M104.3,160 Q106.8,158.8 109.3,160"/>
</g>
<ellipse cx="99.5" cy="160.6" rx="2" ry="1" fill="#3a2a26"/>
<ellipse cx="114" cy="160.6" rx="2" ry="1" fill="#3a2a26"/>
<path d="M96,156.2 Q99.5,154.8 103,156" stroke="#5a3e32" stroke-width="0.8" fill="none"/>
<path d="M110.5,156 Q114,154.8 117.5,156.2" stroke="#5a3e32" stroke-width="0.8" fill="none"/>
<path d="M105,169.5 Q106.8,171 108.6,169.5" stroke="#a87c68" stroke-width="0.8" fill="none"/>
<path d="M101.8,176.3 Q106.8,178 112,176" stroke="#9a5a52" stroke-width="1.1" fill="none"/>
</g>
</g>
</svg>

<svg style="left:0;top:0" width="740" height="416" viewBox="0 0 740 416">
<defs>
<filter id="b1" x="-20%" y="-20%" width="140%" height="140%"><feGaussianBlur stdDeviation="1.2"/></filter>
<filter id="b05" x="-20%" y="-20%" width="140%" height="140%"><feGaussianBlur stdDeviation="0.4"/></filter>
<linearGradient id="tbg" x1="0" y1="0" x2="1" y2="0">
<stop offset="0" stop-color="#c9d8e6"/><stop offset="0.05" stop-color="#9db6d0"/><stop offset="0.09" stop-color="#4b79b4"/><stop offset="0.3" stop-color="#2f66ad"/><stop offset="0.6" stop-color="#2b62a8"/><stop offset="0.76" stop-color="#24528f"/><stop offset="1" stop-color="#234f88"/>
</linearGradient>
<radialGradient id="orb" cx="0.5" cy="0.4" r="0.6"><stop offset="0" stop-color="#5aa0d8"/><stop offset="0.7" stop-color="#1f5a9a"/><stop offset="1" stop-color="#173f78"/></radialGradient>
<linearGradient id="tbtn1" x1="0" y1="0" x2="0" y2="1"><stop offset="0" stop-color="#c4e2f0"/><stop offset="0.5" stop-color="#9ccfe8"/><stop offset="1" stop-color="#84c4e4"/></linearGradient>
<linearGradient id="tbtn2" x1="0" y1="0" x2="0" y2="1"><stop offset="0" stop-color="#86c2e2"/><stop offset="0.5" stop-color="#5aa9d4"/><stop offset="1" stop-color="#4a9fd0"/></linearGradient>
<clipPath id="tbc"><rect x="0" y="0" width="740" height="11"/></clipPath>
</defs>
<!-- title bar -->
<g clip-path="url(#tbc)">
<rect x="0" y="0" width="740" height="11" fill="url(#tbg)"/>
<g filter="url(#b1)" fill="#cfe0f0">
<rect x="50" y="4" width="22" height="8" opacity="0.85"/>
<rect x="90" y="4" width="20" height="8" opacity="0.8"/>
<rect x="135" y="4" width="14" height="7" opacity="0.6"/>
<rect x="217" y="6" width="14" height="6" fill="#5aa070" opacity="0.8"/>
<rect x="178" y="5" width="10" height="6" fill="#c04060" opacity="0.7"/>
<rect x="262" y="5" width="10" height="6" fill="#8090a8" opacity="0.6"/>
<rect x="293" y="4" width="22" height="8" opacity="0.9"/>
<rect x="338" y="5" width="16" height="7" opacity="0.7"/>
<rect x="376" y="4" width="16" height="8" opacity="0.85"/>
<rect x="418" y="4" width="14" height="8" opacity="0.8"/>
<rect x="458" y="4" width="18" height="8" opacity="0.9"/>
<rect x="580" y="4" width="14" height="8" opacity="0.45"/>
<rect x="620" y="8" width="14" height="4" opacity="0.4"/>
<rect x="545" y="3" width="12" height="6" fill="#a06070" opacity="0.4"/>
</g>
<ellipse cx="24" cy="5.5" rx="22" ry="6" fill="#e4edf5" filter="url(#b1)" opacity="0.9"/>
<!-- panopto tiny icon -->
<path d="M5.5,1.2 L9.3,8.8 L1.7,8.8 Z" fill="#3a9a3c"/>
<circle cx="5.5" cy="6.2" r="1.3" fill="#d8f0d0"/>
<!-- window buttons -->
<rect x="683" y="-1" width="28.5" height="9" rx="1.5" fill="#7488a8" stroke="#b8c4d4" stroke-width="0.5" opacity="0.95"/>
<rect x="711.5" y="-1" width="26.5" height="9" rx="1.5" fill="#c83c3a" stroke="#e0b0b0" stroke-width="0.5"/><rect x="712" y="0" width="25.5" height="3" fill="#e08888" opacity="0.6"/>
<line x1="697" y1="0" x2="697" y2="8" stroke="#c8d4e4" stroke-width="0.4"/>
<rect x="688" y="4.3" width="5.5" height="1.6" fill="#fff"/>
<rect x="701" y="2" width="5.2" height="4" fill="none" stroke="#fff" stroke-width="1.1"/>
<path d="M722.3,2 L726.7,6 M726.7,2 L722.3,6" stroke="#fff" stroke-width="1.3"/>
</g>
<!-- nav icons -->
<circle cx="18" cy="24.2" r="6" fill="none" stroke="#fff" stroke-width="1.2"/>
<rect x="14.6" y="22" width="5" height="4.4" rx="0.8" fill="#fff"/>
<path d="M19.9,24.2 L22,22.4 V26 Z" fill="#fff"/>
<g stroke="#3c4854" fill="none" stroke-width="0.8">
<circle cx="152" cy="24.2" r="7.2"/>
<path d="M147.5,21.6 H156.5 M147.5,24.2 H156.5 M147.5,26.8 H156.5" stroke-width="0.9"/>
<circle cx="272.5" cy="24.2" r="7.2"/>
<circle cx="272.5" cy="24.2" r="2.6" stroke-width="1.6"/>
<path d="M272.5,20 v-1.4 M272.5,28.4 v1.4 M268.3,24.2 h-1.4 M276.7,24.2 h1.4" stroke-width="1.2"/>
</g>
<!-- stop button -->
<circle cx="28.8" cy="62" r="17" fill="#fff" stroke="#e2e2e2" stroke-width="0.8"/>
<rect x="20.8" y="54" width="16" height="16" fill="#f3a9b1"/>
<!-- cursor -->
<path d="M23.3,59.3 V68.6 L25.4,66.7 L26.9,70 L28.2,69.4 L26.8,66.2 L29.6,66 Z" fill="#fff" stroke="#111" stroke-width="0.6" stroke-linejoin="round"/>
<!-- info icons -->
<circle cx="69.2" cy="110" r="3.2" fill="#3d8fd0"/>
<circle cx="69.2" cy="110" r="3.2" fill="none" stroke="#8cc0e8" stroke-width="0.5"/>
<rect x="68.8" y="109.4" width="0.9" height="2.3" fill="#fff"/><rect x="68.8" y="107.9" width="0.9" height="0.9" fill="#fff"/>
<circle cx="725.7" cy="380.5" r="3.4" fill="#3d8fd0"/>
<rect x="725.3" y="380" width="0.9" height="2.4" fill="#fff"/><rect x="725.3" y="378.4" width="0.9" height="0.9" fill="#fff"/>
<!-- meter -->
<rect x="215" y="118" width="7.4" height="113" fill="#e8e8e8"/>
<rect x="215.4" y="118" width="6.6" height="20.5" fill="#f0c6cc"/>
<rect x="215.4" y="138.5" width="6.6" height="23.5" fill="#f0ebb6"/>
<rect x="215.4" y="162" width="6.6" height="69" fill="#bdeac0"/>
<g stroke="#e8e8e8" stroke-width="0.6">
<path d="M218.7,118 V231"/>
<path d="M215,121.2 h8 M215,124.4 h8 M215,127.6 h8 M215,130.8 h8 M215,134 h8 M215,137.2 h8 M215,140.4 h8 M215,143.6 h8 M215,146.8 h8 M215,150 h8 M215,153.2 h8 M215,156.4 h8 M215,159.6 h8 M215,162.8 h8 M215,166 h8 M215,169.2 h8 M215,172.4 h8 M215,175.6 h8 M215,178.8 h8 M215,182 h8 M215,185.2 h8 M215,188.4 h8 M215,191.6 h8 M215,194.8 h8 M215,198 h8 M215,201.2 h8 M215,204.4 h8 M215,207.6 h8 M215,210.8 h8 M215,214 h8 M215,217.2 h8 M215,220.4 h8 M215,223.6 h8 M215,226.8 h8"/>
</g>
<!-- volume slider -->
<rect x="227.1" y="118" width="1" height="70" fill="#97a5b0"/>
<rect x="227.1" y="188" width="1" height="43" fill="#3b8fd0"/>
<circle cx="227.6" cy="188.2" r="3.3" fill="#3a8fd0"/>
<!-- checkmarks -->
<path d="M12,340 L14.3,342.6 L18.4,337" stroke="#fff" stroke-width="1.1" fill="none"/>
<path d="M252,362 L254.3,364.6 L258.4,359" stroke="#fff" stroke-width="1.1" fill="none"/>
<!-- sliders -->
<rect x="356" y="380.3" width="41" height="0.9" fill="#7a7a7a"/>
<rect x="362.5" y="377.4" width="4.6" height="6.6" rx="0.8" fill="#d0d0d0" stroke="#aaa" stroke-width="0.4"/>
<rect x="438.4" y="380.3" width="40" height="0.9" fill="#aaa"/>
<rect x="439" y="377.4" width="4.6" height="6.6" rx="0.8" fill="#dedede" stroke="#c4c4c4" stroke-width="0.4"/>
<!-- taskbar -->
<g>
<rect x="0" y="394" width="740" height="22" fill="none"/>
<path d="M480,394 Q520,398 545,416 L560,416 Q530,398 492,394 Z" fill="#8cc4ec" opacity="0.55" filter="url(#b1)"/>
<rect x="0" y="393.6" width="740" height="0.8" fill="#9cc8e8" opacity="0.7"/>
<rect x="734" y="394" width="6" height="22" fill="#3d6a9e" opacity="0.8"/>
<!-- start orb -->
<circle cx="14.3" cy="405.3" r="9.3" fill="url(#orb)"/>
<circle cx="14.3" cy="405.3" r="9.3" fill="none" stroke="#8cc4e4" stroke-width="0.7" opacity="0.8"/>
<g filter="url(#b05)" transform="translate(14.3 405.5) scale(1.18) translate(-13.9 -405.5)">
<path d="M9.6,400.8 Q11.8,399.6 13.8,400.8 L13.2,404.8 Q11.2,403.8 9,404.9 Z" fill="#e8502c"/>
<path d="M14.9,401.2 Q17,402.4 19.2,401.2 L18.6,405.2 Q16.4,406.4 14.3,405.2 Z" fill="#7cc242"/>
<path d="M8.8,405.9 Q11,404.8 13,405.9 L12.4,409.9 Q10.4,408.9 8.2,410 Z" fill="#3ca0e8"/>
<path d="M14.1,406.3 Q16.2,407.5 18.4,406.3 L17.8,410.3 Q15.6,411.5 13.5,410.3 Z" fill="#f8cc3c"/>
</g>
<!-- IE -->
<g filter="url(#b05)">
<text x="40.6" y="412.6" font-family="Liberation Sans, sans-serif" font-weight="bold" font-size="24" fill="#8fe0fb">e</text>
<path d="M41.6,411.4 Q38.6,405 45,399.6 Q50.6,395.4 55.4,397" stroke="#e4d44c" stroke-width="1.7" fill="none"/>
<path d="M51.4,396.8 Q54.2,395.6 55.6,397.6" stroke="#8ccc5c" stroke-width="1.8" fill="none"/>
</g>
<!-- folder -->
<g filter="url(#b05)">
<path d="M74,400 L76,398.6 L82,398.6 L83,400 L90,400 L90,412.3 L74,412.3 Z" fill="#f3e6a2"/>
<rect x="75.5" y="402" width="13" height="4" fill="#fbf4c8"/>
<rect x="75" y="407" width="14.5" height="4.6" fill="#a8d4e2"/>
<rect x="80" y="400" width="1.6" height="1.2" fill="#444"/><rect x="84" y="400.4" width="1.6" height="1.2" fill="#444"/>
</g>
<!-- media player -->
<g filter="url(#b05)">
<rect x="108.4" y="399.5" width="11.4" height="12.5" fill="#86bfe6"/>
<circle cx="114" cy="405.9" r="4.9" fill="#e0741e"/>
<path d="M112.4,402.9 L117,405.9 L112.4,408.9 Z" fill="#fff"/>
</g>
<!-- chrome -->
<g filter="url(#b05)">
<circle cx="149.5" cy="405.5" r="8" fill="#e6443a"/>
<path d="M149.5,405.5 L142.6,401.5 A8,8 0 0 0 145.5,412.4 Z M149.5,405.5 L145.5,412.4 A8,8 0 0 0 149.6,413.5 L153.5,406.6Z" fill="#34a853"/>
<path d="M149.5,405.5 L157.4,404 A8,8 0 0 1 149.6,413.5 Z" fill="#f8c02c"/>
<circle cx="149.5" cy="405.5" r="3.7" fill="#fff"/>
<circle cx="149.5" cy="405.5" r="2.9" fill="#4a88e8"/>
</g>
<!-- panopto button -->
<rect x="167" y="394.3" width="31" height="22" fill="url(#tbtn1)" stroke="#d8ecf6" stroke-width="0.6"/>
<g filter="url(#b05)" fill="#3c9c40">
<path d="M183.3,397.2 L187.6,399.6 L186,403.2 L180.2,400.6 Z"/>
<path d="M179.2,401.6 L180.8,407.2 L178.4,411.8 L175.8,407 Z" fill="#2e8c3a"/>
<path d="M188.6,403 L191.2,408 L188,412.4 L181,412.4 L180.6,409 L186.6,408.4 Z" fill="#4cac48"/>
<path d="M182,403.4 L186.6,405.9 L182,408.4 Z" fill="#e8f6e8"/>
</g>
<!-- third button -->
<rect x="200.8" y="394.3" width="31.5" height="22" fill="url(#tbtn2)" stroke="#a8d4ec" stroke-width="0.6"/>
<g filter="url(#b05)">
<rect x="208" y="398" width="11.5" height="10.5" fill="#f6f6f0" stroke="#2c3c50" stroke-width="0.7"/>
<rect x="208.6" y="400.4" width="7" height="2" fill="#f0d848"/>
<rect x="208.6" y="403.6" width="6" height="2" fill="#4a78c8"/>
<path d="M215,401 L223.6,410.6 L221.8,411.6 L219.4,408.4 L217,410.4 Z" fill="#fff" stroke="#2c3c50" stroke-width="0.6"/>
</g>
<!-- tray -->
<path d="M632.2,406.6 L634.6,406.6 L633.4,405 Z" fill="#fff"/>
<g filter="url(#b05)">
<rect x="642.6" y="401.6" width="5" height="7.6" fill="#f0f0f0"/><rect x="644" y="400.6" width="2.2" height="1.4" fill="#ddd"/>
<path d="M655.6,401.4 h5 v4 h-5 z" fill="#f4f4f4"/><rect x="655.4" y="401" width="0.8" height="8.6" fill="#eee"/>
<circle cx="660.8" cy="407.6" r="2.1" fill="#e0303a"/>
<path d="M668,404.4 h1.6 l2.4,-2.2 v7.6 l-2.4,-2.2 h-1.6 z" fill="#f4f4f4"/>
<path d="M673.4,403.6 q1.4,2.2 0,4.4" stroke="#d8e4f0" stroke-width="0.7" fill="none"/>
<path d="M681.6,409.4 v-1.4 h1.2 v1.4 z M683.6,409.4 v-2.8 h1.2 v2.8 z M685.6,409.4 v-4.4 h1.2 v4.4 z M687.6,409.4 v-6.4 h1.2 v6.4 z" fill="#f4f4f4"/>
</g>
</g>
</svg>

<span class="t" style="left:11.5px;top:0.7px;font-size:6.44px;color:#111;text-shadow:0 0 2px #fff,0 0 3px #fff,0 0 4px #fff">Panopto</span>
<span class="t" style="left:33.5px;top:19.8px;font-size:7.96px;color:#fff">Create New Recording</span>
<span class="t" style="left:164.3px;top:19.8px;font-size:7.49px;color:#46525e">Manage Recordings</span>
<span class="t" style="left:287px;top:19.8px;font-size:7.19px;color:#46525e">Settings</span>
<span class="t" style="right:7px;top:15.0px;font-size:6.28px;color:#e8eaec">unified\cbarrett8495</span>
<span class="t" style="right:7px;top:24.3px;font-size:6.25px;color:#fff;font-weight:bold">Sign out</span>
<span class="t" style="left:100.5px;top:45.5px;font-size:6.51px;color:#e0203a;font-weight:bold">Starting Devices</span>
<span class="t" style="left:100.5px;top:64.5px;font-size:6.70px;color:#444">Folder</span>
<span class="t" style="left:100.5px;top:79.8px;font-size:6.74px;color:#444">Name</span>
<span class="t" style="left:139px;top:64.5px;font-size:6.83px;color:#444">VWCC Spring 2020 - Spring 2020 MTH 132 - V1 Business Mathematics</span>
<span class="t" style="left:139px;top:79.8px;font-size:6.77px;color:#444">Chapter 14</span>
<span class="t" style="left:-71px;width:200px;text-align:center;top:81.0px;font-size:5.83px;color:#d4d4d4">Stop</span>
<span class="t" style="left:708px;top:45.0px;font-size:6.46px;color:#dcdcdc">Webcast</span>
<span class="t" style="left:605.5px;width:200px;text-align:center;top:80.0px;font-size:6.35px;color:#b4d0e6">Join Session</span>
<span class="t" style="left:10.4px;top:105.5px;font-size:6.90px;color:#444">Primary Sources</span>
<span class="t" style="left:248px;top:104.5px;font-size:6.77px;color:#444">Main Screen</span>
<span class="t" style="left:196.5px;width:200px;text-align:center;top:104.8px;font-size:7.60px;color:#666">✕</span>
<span class="t" style="left:10.4px;top:237.8px;font-size:6.97px;color:#444">Video</span>
<span class="t" style="left:10.4px;top:254.5px;font-size:6.92px;color:#444">Audio</span>
<span class="t" style="left:10.4px;top:270.5px;font-size:6.90px;color:#444">Quality</span>
<span class="t" style="left:37px;top:237.8px;font-size:6.83px;color:#9a9a9a">HD Pro Webcam C920</span>
<span class="t" style="left:37px;top:254.5px;font-size:6.90px;color:#9a9a9a">Microphone (HD Pro Webcam C920)</span>
<span class="t" style="left:37px;top:270.5px;font-size:7.05px;color:#9a9a9a">High</span>
<span class="t" style="left:32px;top:289.3px;font-size:6.54px;color:#dadada">Capture Computer Audio</span>
<span class="t" style="left:10.4px;top:310.2px;font-size:6.42px;color:#333;font-weight:bold">Secondary Sources</span>
<span class="t" style="left:24.2px;top:323.0px;font-size:6.93px;color:#444">Capture PowerPoint</span>
<span class="t" style="left:24.2px;top:335.1px;font-size:6.82px;color:#444">Capture Main Screen</span>
<span class="t" style="left:21px;width:200px;text-align:center;top:351.5px;font-size:6.97px;color:#fff">Add Another Video Source</span>
<span class="t" style="left:264px;top:357.1px;font-size:6.92px;color:#fff">Enable screen capture preview</span>
<span class="t" style="left:245.7px;top:376.1px;font-size:6.77px;color:#555">Resolution</span>
<span class="t" style="left:286.8px;top:376.1px;font-size:6.68px;color:#aaa">1280 x 1024</span>
<span class="t" style="left:342px;top:376.1px;font-size:6.37px;color:#555">fps</span>
<span class="t" style="left:402.7px;top:376.1px;font-size:6.27px;color:#555">8</span>
<span class="t" style="left:419px;top:376.1px;font-size:6.62px;color:#555">kbps</span>
<span class="t" style="left:485px;top:376.1px;font-size:6.41px;color:#555">340</span>
<span class="t" style="left:613px;width:200px;text-align:center;top:397.1px;font-size:6.19px;color:#fff">12:27 PM</span>
<span class="t" style="left:613px;width:200px;text-align:center;top:406.3px;font-size:6.29px;color:#fff">4/20/2020</span>
<div class="nest"><div class="screen">
<div class="titlebar"></div>
<div class="b navbar"></div>
<div class="b tab"></div>
<div class="b" style="left:0;top:36px;width:740px;height:358px;background:#fff"></div>
<div class="b inp" style="left:135px;top:62px;width:600px;height:14px"></div>
<div class="b inp" style="left:135px;top:78px;width:538px;height:13px"></div>
<div class="b" style="left:676px;top:78px;width:59px;height:13px;background:#d3e6f3"></div>
<div class="b" style="left:694px;top:44px;width:10px;height:10px;background:#cfcfcf"></div>
<div class="b panel" style="left:7px;top:102px;width:228px;height:199px"></div>
<div class="b panel" style="left:7px;top:307px;width:228px;height:81px"></div>
<div class="b panel" style="left:243px;top:102px;width:492px;height:286px"></div>
<div class="b" style="left:243px;top:115.4px;width:492px;height:256.6px;background:#434343;border-top:1.2px solid #c9dcea"></div><div class="b" style="left:243px;top:115.4px;width:62px;height:1.3px;background:#4a9fdc"></div>
<div class="b inp2" style="left:35px;top:236px;width:198.5px;height:12px"></div>
<div class="b inp2" style="left:35px;top:253px;width:198.5px;height:12px"></div>
<div class="b inp2" style="left:35px;top:269px;width:198.5px;height:12px"></div>
<div class="b" style="left:11px;top:288px;width:10px;height:10px;background:#d0d0d0"></div>
<div class="b" style="left:10px;top:323px;width:10px;height:10px;background:#fff;border:0.5px solid #ccc"></div>
<div class="b" style="left:10px;top:335px;width:10px;height:10px;background:#3b94d0"></div>
<div class="b" style="left:10px;top:347.5px;width:221.8px;height:16.5px;background:#4397cd"></div>
<div class="b" style="left:250px;top:357px;width:10px;height:10px;background:#3b94d0"></div>
<div class="b inp2" style="left:284px;top:375.5px;width:52px;height:10px"></div>
<div class="taskbar"></div>
<svg style="left:10px;top:118px" width="204" height="113" viewBox="10 118 204 113">
<defs>
<linearGradient id="wallg" x1="0" y1="0" x2="1" y2="0"><stop offset="0" stop-color="#2f373c"/><stop offset="0.3" stop-color="#454f54"/><stop offset="0.55" stop-color="#3d464b"/><stop offset="1" stop-color="#353b40"/></linearGradient>
<linearGradient id="wallv" x1="0" y1="0" x2="0" y2="1"><stop offset="0" stop-color="#000" stop-opacity="0.28"/><stop offset="0.55" stop-color="#000" stop-opacity="0"/><stop offset="1" stop-color="#fff" stop-opacity="0.04"/></linearGradient>
<filter id="bl" x="-5%" y="-5%" width="110%" height="110%"><feGaussianBlur stdDeviation="0.7"/></filter>
<filter id="bl2" x="-5%" y="-5%" width="110%" height="110%"><feGaussianBlur stdDeviation="0.45"/></filter>
<clipPath id="vc"><rect x="10" y="118" width="204" height="113"/></clipPath>
<clipPath id="shirtc"><path d="M45,232 L50,218 L58,205 L70,194 L84,189 L128,188 L142,192 L153,202 L158,215 L161,232 Z"/></clipPath>
</defs>
<g clip-path="url(#vc)">
<rect x="10" y="118" width="204" height="113" fill="#efefef"/>
<rect x="10" y="118" width="187.5" height="68" fill="url(#wallg)"/>
<rect x="10" y="118" width="187.5" height="68" fill="url(#wallv)"/>
<rect x="10" y="186.3" width="188" height="3.2" fill="#dcdcdc"/>
<rect x="10" y="189.5" width="188" height="42" fill="#f1f1f1"/>
<rect x="197.5" y="118" width="16.5" height="113" fill="#f6f2ee"/>
<rect x="197.5" y="118" width="2.5" height="113" fill="#ebe6e1"/>
<rect x="140" y="196" width="50" height="36" fill="#f7f7f7" stroke="#e4e4e4" stroke-width="0.6"/>
<g filter="url(#bl2)">
<rect x="167.4" y="140.8" width="9" height="13.2" fill="#e9e9ee"/>
<rect x="166.6" y="154" width="10.5" height="1.3" fill="#1e262b"/>
<path d="M207.6,176.5 l-1.4,-2.4 M207.6,176.5 l1.6,-2.6 M207.6,176.5 v9" stroke="#6a5a4a" stroke-width="0.7" fill="none"/>
<path d="M205.2,186 h6.6 v2 h-1.4 v11 h-1.4 v-5 h-2.4 v2.6 h-1.4 z" fill="#7e3a2c"/>
<rect x="195" y="196" width="0.8" height="36" fill="#cfcfcf"/>
</g>
<g filter="url(#bl)">
<path d="M56.5,232 L56.8,172 Q57,163.5 65,163.5 L131,163.5 Q138.8,163.5 139,172 L140,232 Z" fill="#842a22"/>
<path d="M64.5,232 L64.5,181 Q65,174.5 72,174.5 L125,174.5 L130,232 Z" fill="#ecd9d2"/>
<path d="M56.5,200 L56.8,172 Q57,163.5 65,163.5 L75,163.5 L75,167 L66,167.5 Q60.5,168 60.3,174 L60,200 Z" fill="#a03a2e"/>
<!-- shirt -->
<path d="M45,232 L50,218 L58,205 L70,194 L84,189 L128,188 L142,192 L153,202 L158,215 L161,232 Z" fill="#ebebf1"/>
<g clip-path="url(#shirtc)" fill="none" stroke="#4a5a7e" stroke-width="4.6">
<path d="M50,207 Q62,196.5 78,195 L96,197.5"/>
<path d="M44,216.5 Q60,206 78,204.5 L98,207"/>
<path d="M40,226 Q58,215.5 78,214 L101,216.5"/>
<path d="M38,235 Q58,225 80,223.5 L104,226.5"/>
<path d="M114,196.5 L132,193.5 Q146,196 160,208"/>
<path d="M112,205.5 L132,202.5 Q146,205 164,218"/>
<path d="M110,214.5 L132,211.5 Q148,214.5 166,228"/>
<path d="M108,224 L132,221 Q150,224 168,238"/>
<path d="M106,233.5 L132,230.5 Q150,233 166,244"/>
</g>
<!-- neck & V -->
<path d="M97.5,180 L97,196 L103,212 L107,200 L116,195 L116.5,180 Z" fill="#c39783"/>
<path d="M99,196 L103,214 L106.5,222 L108.5,210 L112,196 Z" fill="#c98c80"/>
<!-- hair back -->
<path d="M106,129.8 Q94,130 89.5,140 Q86.5,148 86,160 Q85,175 80,188 Q73.5,200 72,208 Q71.5,216 77,218.5 Q84,219.5 88.5,212 Q93,203 96,193 L97,182 L116,182 L117,194 Q119,204 123,211 Q127,216.5 131.5,214.5 Q136.5,211 136.8,203 Q137,196 133.5,188 Q130.5,177 129.5,163 Q128.5,150 125,141 Q120,129.6 106,129.8 Z" fill="#36241c"/>
<!-- face -->
<path d="M106,138 Q96,138.5 92.5,146 Q90.2,154 91,164 Q92.4,174 98,181 Q102.5,186 106.5,186 Q111,186 115.5,181 Q121,173 122.2,164 Q123,153 119.8,146 Q116,138.5 106,138 Z" fill="#d0a996"/>
<ellipse cx="98" cy="170" rx="4" ry="3" fill="#d08a80" opacity="0.35"/>
<ellipse cx="116" cy="170" rx="4" ry="3" fill="#d08a80" opacity="0.3"/>
<!-- hairline: part on left, sweeping right -->
<path d="M95,144.5 Q100.5,139.6 108,140 Q116,141.2 120,148 Q122.4,153 122.4,161 L125,150 Q122,136 108,133.5 Q96,133 92.2,141 Q90.4,147 90.6,158 Q91.4,149.5 95,144.5 Z" fill="#36241c"/>
<path d="M92.5,176 Q95,181 100,185 L97,187 L92,180 Z" fill="#a87c68" opacity="0.5"/>
<path d="M121,176 Q118,181 113,185 L116.5,187 L121.5,180 Z" fill="#a87c68" opacity="0.35"/>
<!-- hair strands front over shoulders -->
<path d="M97,182 Q95,196 90,206 Q86,214 80,217 Q88,219 93,212 Q99,203 100,192 Z" fill="#36241c"/>
<path d="M116,182 Q117,196 121,206 Q124,213 129,216 Q120,221 113,214 Q108,206 111,192 Z" fill="#36241c"/>
<g fill="none" stroke="#5e4032" stroke-width="2.2" opacity="0.55" stroke-linecap="round">
<path d="M94,138 Q88,150 87.5,166 Q86,180 81,192 Q76,202 77,211"/>
<path d="M98,133 Q106,131 114,134"/>
<path d="M120,139 Q125.5,152 126,166 Q127.5,180 131,191 Q134,200 132,209"/>
<path d="M92,192 Q88,204 84,212"/>
<path d="M121,196 Q124,205 128,210"/>
</g>
</g>
<g filter="url(#bl2)">
<g fill="none" stroke="#6a544c" stroke-width="0.55">
<rect x="94.3" y="157.3" width="10" height="7.4" rx="2"/>
<rect x="109.3" y="157.3" width="10" height="7.4" rx="2"/>
<path d="M104.3,160 Q106.8,158.8 109.3,160"/>
</g>
<ellipse cx="99.5" cy="160.6" rx="2" ry="1" fill="#3a2a26"/>
<ellipse cx="114" cy="160.6" rx="2" ry="1" fill="#3a2a26"/>
<path d="M96,156.2 Q99.5,154.8 103,156" stroke="#5a3e32" stroke-width="0.8" fill="none"/>
<path d="M110.5,156 Q114,154.8 117.5,156.2" stroke="#5a3e32" stroke-width="0.8" fill="none"/>
<path d="M105,169.5 Q106.8,171 108.6,169.5" stroke="#a87c68" stroke-width="0.8" fill="none"/>
<path d="M101.8,176.3 Q106.8,178 112,176" stroke="#9a5a52" stroke-width="1.1" fill="none"/>
</g>
</g>
</svg>

<svg style="left:0;top:0" width="740" height="416" viewBox="0 0 740 416">
<defs>
<filter id="b1" x="-20%" y="-20%" width="140%" height="140%"><feGaussianBlur stdDeviation="1.2"/></filter>
<filter id="b05" x="-20%" y="-20%" width="140%" height="140%"><feGaussianBlur stdDeviation="0.4"/></filter>
<linearGradient id="tbg" x1="0" y1="0" x2="1" y2="0">
<stop offset="0" stop-color="#c9d8e6"/><stop offset="0.05" stop-color="#9db6d0"/><stop offset="0.09" stop-color="#4b79b4"/><stop offset="0.3" stop-color="#2f66ad"/><stop offset="0.6" stop-color="#2b62a8"/><stop offset="0.76" stop-color="#24528f"/><stop offset="1" stop-color="#234f88"/>
</linearGradient>
<radialGradient id="orb" cx="0.5" cy="0.4" r="0.6"><stop offset="0" stop-color="#5aa0d8"/><stop offset="0.7" stop-color="#1f5a9a"/><stop offset="1" stop-color="#173f78"/></radialGradient>
<linearGradient id="tbtn1" x1="0" y1="0" x2="0" y2="1"><stop offset="0" stop-color="#c4e2f0"/><stop offset="0.5" stop-color="#9ccfe8"/><stop offset="1" stop-color="#84c4e4"/></linearGradient>
<linearGradient id="tbtn2" x1="0" y1="0" x2="0" y2="1"><stop offset="0" stop-color="#86c2e2"/><stop offset="0.5" stop-color="#5aa9d4"/><stop offset="1" stop-color="#4a9fd0"/></linearGradient>
<clipPath id="tbc"><rect x="0" y="0" width="740" height="11"/></clipPath>
</defs>
<!-- title bar -->
<g clip-path="url(#tbc)">
<rect x="0" y="0" width="740" height="11" fill="url(#tbg)"/>
<g filter="url(#b1)" fill="#cfe0f0">
<rect x="50" y="4" width="22" height="8" opacity="0.85"/>
<rect x="90" y="4" width="20" height="8" opacity="0.8"/>
<rect x="135" y="4" width="14" height="7" opacity="0.6"/>
<rect x="217" y="6" width="14" height="6" fill="#5aa070" opacity="0.8"/>
<rect x="178" y="5" width="10" height="6" fill="#c04060" opacity="0.7"/>
<rect x="262" y="5" width="10" height="6" fill="#8090a8" opacity="0.6"/>
<rect x="293" y="4" width="22" height="8" opacity="0.9"/>
<rect x="338" y="5" width="16" height="7" opacity="0.7"/>
<rect x="376" y="4" width="16" height="8" opacity="0.85"/>
<rect x="418" y="4" width="14" height="8" opacity="0.8"/>
<rect x="458" y="4" width="18" height="8" opacity="0.9"/>
<rect x="580" y="4" width="14" height="8" opacity="0.45"/>
<rect x="620" y="8" width="14" height="4" opacity="0.4"/>
<rect x="545" y="3" width="12" height="6" fill="#a06070" opacity="0.4"/>
</g>
<ellipse cx="24" cy="5.5" rx="22" ry="6" fill="#e4edf5" filter="url(#b1)" opacity="0.9"/>
<!-- panopto tiny icon -->
<path d="M5.5,1.2 L9.3,8.8 L1.7,8.8 Z" fill="#3a9a3c"/>
<circle cx="5.5" cy="6.2" r="1.3" fill="#d8f0d0"/>
<!-- window buttons -->
<rect x="683" y="-1" width="28.5" height="9" rx="1.5" fill="#7488a8" stroke="#b8c4d4" stroke-width="0.5" opacity="0.95"/>
<rect x="711.5" y="-1" width="26.5" height="9" rx="1.5" fill="#c83c3a" stroke="#e0b0b0" stroke-width="0.5"/><rect x="712" y="0" width="25.5" height="3" fill="#e08888" opacity="0.6"/>
<line x1="697" y1="0" x2="697" y2="8" stroke="#c8d4e4" stroke-width="0.4"/>
<rect x="688" y="4.3" width="5.5" height="1.6" fill="#fff"/>
<rect x="701" y="2" width="5.2" height="4" fill="none" stroke="#fff" stroke-width="1.1"/>
<path d="M722.3,2 L726.7,6 M726.7,2 L722.3,6" stroke="#fff" stroke-width="1.3"/>
</g>
<!-- nav icons -->
<circle cx="18" cy="24.2" r="6" fill="none" stroke="#fff" stroke-width="1.2"/>
<rect x="14.6" y="22" width="5" height="4.4" rx="0.8" fill="#fff"/>
<path d="M19.9,24.2 L22,22.4 V26 Z" fill="#fff"/>
<g stroke="#3c4854" fill="none" stroke-width="0.8">
<circle cx="152" cy="24.2" r="7.2"/>
<path d="M147.5,21.6 H156.5 M147.5,24.2 H156.5 M147.5,26.8 H156.5" stroke-width="0.9"/>
<circle cx="272.5" cy="24.2" r="7.2"/>
<circle cx="272.5" cy="24.2" r="2.6" stroke-width="1.6"/>
<path d="M272.5,20 v-1.4 M272.5,28.4 v1.4 M268.3,24.2 h-1.4 M276.7,24.2 h1.4" stroke-width="1.2"/>
</g>
<!-- stop button -->
<circle cx="28.8" cy="62" r="17" fill="#fff" stroke="#e2e2e2" stroke-width="0.8"/>
<rect x="20.8" y="54" width="16" height="16" fill="#f3a9b1"/>
<!-- cursor -->
<path d="M23.3,59.3 V68.6 L25.4,66.7 L26.9,70 L28.2,69.4 L26.8,66.2 L29.6,66 Z" fill="#fff" stroke="#111" stroke-width="0.6" stroke-linejoin="round"/>
<!-- info icons -->
<circle cx="69.2" cy="110" r="3.2" fill="#3d8fd0"/>
<circle cx="69.2" cy="110" r="3.2" fill="none" stroke="#8cc0e8" stroke-width="0.5"/>
<rect x="68.8" y="109.4" width="0.9" height="2.3" fill="#fff"/><rect x="68.8" y="107.9" width="0.9" height="0.9" fill="#fff"/>
<circle cx="725.7" cy="380.5" r="3.4" fill="#3d8fd0"/>
<rect x="725.3" y="380" width="0.9" height="2.4" fill="#fff"/><rect x="725.3" y="378.4" width="0.9" height="0.9" fill="#fff"/>
<!-- meter -->
<rect x="215" y="118" width="7.4" height="113" fill="#e8e8e8"/>
<rect x="215.4" y="118" width="6.6" height="20.5" fill="#f0c6cc"/>
<rect x="215.4" y="138.5" width="6.6" height="23.5" fill="#f0ebb6"/>
<rect x="215.4" y="162" width="6.6" height="69" fill="#bdeac0"/>
<g stroke="#e8e8e8" stroke-width="0.6">
<path d="M218.7,118 V231"/>
<path d="M215,121.2 h8 M215,124.4 h8 M215,127.6 h8 M215,130.8 h8 M215,134 h8 M215,137.2 h8 M215,140.4 h8 M215,143.6 h8 M215,146.8 h8 M215,150 h8 M215,153.2 h8 M215,156.4 h8 M215,159.6 h8 M215,162.8 h8 M215,166 h8 M215,169.2 h8 M215,172.4 h8 M215,175.6 h8 M215,178.8 h8 M215,182 h8 M215,185.2 h8 M215,188.4 h8 M215,191.6 h8 M215,194.8 h8 M215,198 h8 M215,201.2 h8 M215,204.4 h8 M215,207.6 h8 M215,210.8 h8 M215,214 h8 M215,217.2 h8 M215,220.4 h8 M215,223.6 h8 M215,226.8 h8"/>
</g>
<!-- volume slider -->
<rect x="227.1" y="118" width="1" height="70" fill="#97a5b0"/>
<rect x="227.1" y="188" width="1" height="43" fill="#3b8fd0"/>
<circle cx="227.6" cy="188.2" r="3.3" fill="#3a8fd0"/>
<!-- checkmarks -->
<path d="M12,340 L14.3,342.6 L18.4,337" stroke="#fff" stroke-width="1.1" fill="none"/>
<path d="M252,362 L254.3,364.6 L258.4,359" stroke="#fff" stroke-width="1.1" fill="none"/>
<!-- sliders -->
<rect x="356" y="380.3" width="41" height="0.9" fill="#7a7a7a"/>
<rect x="362.5" y="377.4" width="4.6" height="6.6" rx="0.8" fill="#d0d0d0" stroke="#aaa" stroke-width="0.4"/>
<rect x="438.4" y="380.3" width="40" height="0.9" fill="#aaa"/>
<rect x="439" y="377.4" width="4.6" height="6.6" rx="0.8" fill="#dedede" stroke="#c4c4c4" stroke-width="0.4"/>
<!-- taskbar -->
<g>
<rect x="0" y="394" width="740" height="22" fill="none"/>
<path d="M480,394 Q520,398 545,416 L560,416 Q530,398 492,394 Z" fill="#8cc4ec" opacity="0.55" filter="url(#b1)"/>
<rect x="0" y="393.6" width="740" height="0.8" fill="#9cc8e8" opacity="0.7"/>
<rect x="734" y="394" width="6" height="22" fill="#3d6a9e" opacity="0.8"/>
<!-- start orb -->
<circle cx="14.3" cy="405.3" r="9.3" fill="url(#orb)"/>
<circle cx="14.3" cy="405.3" r="9.3" fill="none" stroke="#8cc4e4" stroke-width="0.7" opacity="0.8"/>
<g filter="url(#b05)" transform="translate(14.3 405.5) scale(1.18) translate(-13.9 -405.5)">
<path d="M9.6,400.8 Q11.8,399.6 13.8,400.8 L13.2,404.8 Q11.2,403.8 9,404.9 Z" fill="#e8502c"/>
<path d="M14.9,401.2 Q17,402.4 19.2,401.2 L18.6,405.2 Q16.4,406.4 14.3,405.2 Z" fill="#7cc242"/>
<path d="M8.8,405.9 Q11,404.8 13,405.9 L12.4,409.9 Q10.4,408.9 8.2,410 Z" fill="#3ca0e8"/>
<path d="M14.1,406.3 Q16.2,407.5 18.4,406.3 L17.8,410.3 Q15.6,411.5 13.5,410.3 Z" fill="#f8cc3c"/>
</g>
<!-- IE -->
<g filter="url(#b05)">
<text x="40.6" y="412.6" font-family="Liberation Sans, sans-serif" font-weight="bold" font-size="24" fill="#8fe0fb">e</text>
<path d="M41.6,411.4 Q38.6,405 45,399.6 Q50.6,395.4 55.4,397" stroke="#e4d44c" stroke-width="1.7" fill="none"/>
<path d="M51.4,396.8 Q54.2,395.6 55.6,397.6" stroke="#8ccc5c" stroke-width="1.8" fill="none"/>
</g>
<!-- folder -->
<g filter="url(#b05)">
<path d="M74,400 L76,398.6 L82,398.6 L83,400 L90,400 L90,412.3 L74,412.3 Z" fill="#f3e6a2"/>
<rect x="75.5" y="402" width="13" height="4" fill="#fbf4c8"/>
<rect x="75" y="407" width="14.5" height="4.6" fill="#a8d4e2"/>
<rect x="80" y="400" width="1.6" height="1.2" fill="#444"/><rect x="84" y="400.4" width="1.6" height="1.2" fill="#444"/>
</g>
<!-- media player -->
<g filter="url(#b05)">
<rect x="108.4" y="399.5" width="11.4" height="12.5" fill="#86bfe6"/>
<circle cx="114" cy="405.9" r="4.9" fill="#e0741e"/>
<path d="M112.4,402.9 L117,405.9 L112.4,408.9 Z" fill="#fff"/>
</g>
<!-- chrome -->
<g filter="url(#b05)">
<circle cx="149.5" cy="405.5" r="8" fill="#e6443a"/>
<path d="M149.5,405.5 L142.6,401.5 A8,8 0 0 0 145.5,412.4 Z M149.5,405.5 L145.5,412.4 A8,8 0 0 0 149.6,413.5 L153.5,406.6Z" fill="#34a853"/>
<path d="M149.5,405.5 L157.4,404 A8,8 0 0 1 149.6,413.5 Z" fill="#f8c02c"/>
<circle cx="149.5" cy="405.5" r="3.7" fill="#fff"/>
<circle cx="149.5" cy="405.5" r="2.9" fill="#4a88e8"/>
</g>
<!-- panopto button -->
<rect x="167" y="394.3" width="31" height="22" fill="url(#tbtn1)" stroke="#d8ecf6" stroke-width="0.6"/>
<g filter="url(#b05)" fill="#3c9c40">
<path d="M183.3,397.2 L187.6,399.6 L186,403.2 L180.2,400.6 Z"/>
<path d="M179.2,401.6 L180.8,407.2 L178.4,411.8 L175.8,407 Z" fill="#2e8c3a"/>
<path d="M188.6,403 L191.2,408 L188,412.4 L181,412.4 L180.6,409 L186.6,408.4 Z" fill="#4cac48"/>
<path d="M182,403.4 L186.6,405.9 L182,408.4 Z" fill="#e8f6e8"/>
</g>
<!-- third button -->
<rect x="200.8" y="394.3" width="31.5" height="22" fill="url(#tbtn2)" stroke="#a8d4ec" stroke-width="0.6"/>
<g filter="url(#b05)">
<rect x="208" y="398" width="11.5" height="10.5" fill="#f6f6f0" stroke="#2c3c50" stroke-width="0.7"/>
<rect x="208.6" y="400.4" width="7" height="2" fill="#f0d848"/>
<rect x="208.6" y="403.6" width="6" height="2" fill="#4a78c8"/>
<path d="M215,401 L223.6,410.6 L221.8,411.6 L219.4,408.4 L217,410.4 Z" fill="#fff" stroke="#2c3c50" stroke-width="0.6"/>
</g>
<!-- tray -->
<path d="M632.2,406.6 L634.6,406.6 L633.4,405 Z" fill="#fff"/>
<g filter="url(#b05)">
<rect x="642.6" y="401.6" width="5" height="7.6" fill="#f0f0f0"/><rect x="644" y="400.6" width="2.2" height="1.4" fill="#ddd"/>
<path d="M655.6,401.4 h5 v4 h-5 z" fill="#f4f4f4"/><rect x="655.4" y="401" width="0.8" height="8.6" fill="#eee"/>
<circle cx="660.8" cy="407.6" r="2.1" fill="#e0303a"/>
<path d="M668,404.4 h1.6 l2.4,-2.2 v7.6 l-2.4,-2.2 h-1.6 z" fill="#f4f4f4"/>
<path d="M673.4,403.6 q1.4,2.2 0,4.4" stroke="#d8e4f0" stroke-width="0.7" fill="none"/>
<path d="M681.6,409.4 v-1.4 h1.2 v1.4 z M683.6,409.4 v-2.8 h1.2 v2.8 z M685.6,409.4 v-4.4 h1.2 v4.4 z M687.6,409.4 v-6.4 h1.2 v6.4 z" fill="#f4f4f4"/>
</g>
</g>
</svg>

<span class="t" style="left:11.5px;top:0.7px;font-size:6.44px;color:#111;text-shadow:0 0 2px #fff,0 0 3px #fff,0 0 4px #fff">Panopto</span>
<span class="t" style="left:33.5px;top:19.8px;font-size:7.96px;color:#fff">Create New Recording</span>
<span class="t" style="left:164.3px;top:19.8px;font-size:7.49px;color:#46525e">Manage Recordings</span>
<span class="t" style="left:287px;top:19.8px;font-size:7.19px;color:#46525e">Settings</span>
<span class="t" style="right:7px;top:15.0px;font-size:6.28px;color:#e8eaec">unified\cbarrett8495</span>
<span class="t" style="right:7px;top:24.3px;font-size:6.25px;color:#fff;font-weight:bold">Sign out</span>
<span class="t" style="left:100.5px;top:45.5px;font-size:6.51px;color:#e0203a;font-weight:bold">Starting Devices</span>
<span class="t" style="left:100.5px;top:64.5px;font-size:6.70px;color:#444">Folder</span>
<span class="t" style="left:100.5px;top:79.8px;font-size:6.74px;color:#444">Name</span>
<span class="t" style="left:139px;top:64.5px;font-size:6.83px;color:#444">VWCC Spring 2020 - Spring 2020 MTH 132 - V1 Business Mathematics</span>
<span class="t" style="left:139px;top:79.8px;font-size:6.77px;color:#444">Chapter 14</span>
<span class="t" style="left:-71px;width:200px;text-align:center;top:81.0px;font-size:5.83px;color:#d4d4d4">Stop</span>
<span class="t" style="left:708px;top:45.0px;font-size:6.46px;color:#dcdcdc">Webcast</span>
<span class="t" style="left:605.5px;width:200px;text-align:center;top:80.0px;font-size:6.35px;color:#b4d0e6">Join Session</span>
<span class="t" style="left:10.4px;top:105.5px;font-size:6.90px;color:#444">Primary Sources</span>
<span class="t" style="left:248px;top:104.5px;font-size:6.77px;color:#444">Main Screen</span>
<span class="t" style="left:196.5px;width:200px;text-align:center;top:104.8px;font-size:7.60px;color:#666">✕</span>
<span class="t" style="left:10.4px;top:237.8px;font-size:6.97px;color:#444">Video</span>
<span class="t" style="left:10.4px;top:254.5px;font-size:6.92px;color:#444">Audio</span>
<span class="t" style="left:10.4px;top:270.5px;font-size:6.90px;color:#444">Quality</span>
<span class="t" style="left:37px;top:237.8px;font-size:6.83px;color:#9a9a9a">HD Pro Webcam C920</span>
<span class="t" style="left:37px;top:254.5px;font-size:6.90px;color:#9a9a9a">Microphone (HD Pro Webcam C920)</span>
<span class="t" style="left:37px;top:270.5px;font-size:7.05px;color:#9a9a9a">High</span>
<span class="t" style="left:32px;top:289.3px;font-size:6.54px;color:#dadada">Capture Computer Audio</span>
<span class="t" style="left:10.4px;top:310.2px;font-size:6.42px;color:#333;font-weight:bold">Secondary Sources</span>
<span class="t" style="left:24.2px;top:323.0px;font-size:6.93px;color:#444">Capture PowerPoint</span>
<span class="t" style="left:24.2px;top:335.1px;font-size:6.82px;color:#444">Capture Main Screen</span>
<span class="t" style="left:21px;width:200px;text-align:center;top:351.5px;font-size:6.97px;color:#fff">Add Another Video Source</span>
<span class="t" style="left:264px;top:357.1px;font-size:6.92px;color:#fff">Enable screen capture preview</span>
<span class="t" style="left:245.7px;top:376.1px;font-size:6.77px;color:#555">Resolution</span>
<span class="t" style="left:286.8px;top:376.1px;font-size:6.68px;color:#aaa">1280 x 1024</span>
<span class="t" style="left:342px;top:376.1px;font-size:6.37px;color:#555">fps</span>
<span class="t" style="left:402.7px;top:376.1px;font-size:6.27px;color:#555">8</span>
<span class="t" style="left:419px;top:376.1px;font-size:6.62px;color:#555">kbps</span>
<span class="t" style="left:485px;top:376.1px;font-size:6.41px;color:#555">340</span>
<span class="t" style="left:613px;width:200px;text-align:center;top:397.1px;font-size:6.19px;color:#fff">12:27 PM</span>
<span class="t" style="left:613px;width:200px;text-align:center;top:406.3px;font-size:6.29px;color:#fff">4/20/2020</span>
<div class="nest"><div class="screen">
<div class="titlebar"></div>
<div class="b navbar"></div>
<div class="b tab"></div>
<div class="b" style="left:0;top:36px;width:740px;height:358px;background:#fff"></div>
<div class="b inp" style="left:135px;top:62px;width:600px;height:14px"></div>
<div class="b inp" style="left:135px;top:78px;width:538px;height:13px"></div>
<div class="b" style="left:676px;top:78px;width:59px;height:13px;background:#d3e6f3"></div>
<div class="b" style="left:694px;top:44px;width:10px;height:10px;background:#cfcfcf"></div>
<div class="b panel" style="left:7px;top:102px;width:228px;height:199px"></div>
<div class="b panel" style="left:7px;top:307px;width:228px;height:81px"></div>
<div class="b panel" style="left:243px;top:102px;width:492px;height:286px"></div>
<div class="b" style="left:243px;top:115.4px;width:492px;height:256.6px;background:#434343;border-top:1.2px solid #c9dcea"></div><div class="b" style="left:243px;top:115.4px;width:62px;height:1.3px;background:#4a9fdc"></div>
<div class="b inp2" style="left:35px;top:236px;width:198.5px;height:12px"></div>
<div class="b inp2" style="left:35px;top:253px;width:198.5px;height:12px"></div>
<div class="b inp2" style="left:35px;top:269px;width:198.5px;height:12px"></div>
<div class="b" style="left:11px;top:288px;width:10px;height:10px;background:#d0d0d0"></div>
<div class="b" style="left:10px;top:323px;width:10px;height:10px;background:#fff;border:0.5px solid #ccc"></div>
<div class="b" style="left:10px;top:335px;width:10px;height:10px;background:#3b94d0"></div>
<div class="b" style="left:10px;top:347.5px;width:221.8px;height:16.5px;background:#4397cd"></div>
<div class="b" style="left:250px;top:357px;width:10px;height:10px;background:#3b94d0"></div>
<div class="b inp2" style="left:284px;top:375.5px;width:52px;height:10px"></div>
<div class="taskbar"></div>
<svg style="left:10px;top:118px" width="204" height="113" viewBox="10 118 204 113">
<defs>
<linearGradient id="wallg" x1="0" y1="0" x2="1" y2="0"><stop offset="0" stop-color="#2f373c"/><stop offset="0.3" stop-color="#454f54"/><stop offset="0.55" stop-color="#3d464b"/><stop offset="1" stop-color="#353b40"/></linearGradient>
<linearGradient id="wallv" x1="0" y1="0" x2="0" y2="1"><stop offset="0" stop-color="#000" stop-opacity="0.28"/><stop offset="0.55" stop-color="#000" stop-opacity="0"/><stop offset="1" stop-color="#fff" stop-opacity="0.04"/></linearGradient>
<filter id="bl" x="-5%" y="-5%" width="110%" height="110%"><feGaussianBlur stdDeviation="0.7"/></filter>
<filter id="bl2" x="-5%" y="-5%" width="110%" height="110%"><feGaussianBlur stdDeviation="0.45"/></filter>
<clipPath id="vc"><rect x="10" y="118" width="204" height="113"/></clipPath>
<clipPath id="shirtc"><path d="M45,232 L50,218 L58,205 L70,194 L84,189 L128,188 L142,192 L153,202 L158,215 L161,232 Z"/></clipPath>
</defs>
<g clip-path="url(#vc)">
<rect x="10" y="118" width="204" height="113" fill="#efefef"/>
<rect x="10" y="118" width="187.5" height="68" fill="url(#wallg)"/>
<rect x="10" y="118" width="187.5" height="68" fill="url(#wallv)"/>
<rect x="10" y="186.3" width="188" height="3.2" fill="#dcdcdc"/>
<rect x="10" y="189.5" width="188" height="42" fill="#f1f1f1"/>
<rect x="197.5" y="118" width="16.5" height="113" fill="#f6f2ee"/>
<rect x="197.5" y="118" width="2.5" height="113" fill="#ebe6e1"/>
<rect x="140" y="196" width="50" height="36" fill="#f7f7f7" stroke="#e4e4e4" stroke-width="0.6"/>
<g filter="url(#bl2)">
<rect x="167.4" y="140.8" width="9" height="13.2" fill="#e9e9ee"/>
<rect x="166.6" y="154" width="10.5" height="1.3" fill="#1e262b"/>
<path d="M207.6,176.5 l-1.4,-2.4 M207.6,176.5 l1.6,-2.6 M207.6,176.5 v9" stroke="#6a5a4a" stroke-width="0.7" fill="none"/>
<path d="M205.2,186 h6.6 v2 h-1.4 v11 h-1.4 v-5 h-2.4 v2.6 h-1.4 z" fill="#7e3a2c"/>
<rect x="195" y="196" width="0.8" height="36" fill="#cfcfcf"/>
</g>
<g filter="url(#bl)">
<path d="M56.5,232 L56.8,172 Q57,163.5 65,163.5 L131,163.5 Q138.8,163.5 139,172 L140,232 Z" fill="#842a22"/>
<path d="M64.5,232 L64.5,181 Q65,174.5 72,174.5 L125,174.5 L130,232 Z" fill="#ecd9d2"/>
<path d="M56.5,200 L56.8,172 Q57,163.5 65,163.5 L75,163.5 L75,167 L66,167.5 Q60.5,168 60.3,174 L60,200 Z" fill="#a03a2e"/>
<!-- shirt -->
<path d="M45,232 L50,218 L58,205 L70,194 L84,189 L128,188 L142,192 L153,202 L158,215 L161,232 Z" fill="#ebebf1"/>
<g clip-path="url(#shirtc)" fill="none" stroke="#4a5a7e" stroke-width="4.6">
<path d="M50,207 Q62,196.5 78,195 L96,197.5"/>
<path d="M44,216.5 Q60,206 78,204.5 L98,207"/>
<path d="M40,226 Q58,215.5 78,214 L101,216.5"/>
<path d="M38,235 Q58,225 80,223.5 L104,226.5"/>
<path d="M114,196.5 L132,193.5 Q146,196 160,208"/>
<path d="M112,205.5 L132,202.5 Q146,205 164,218"/>
<path d="M110,214.5 L132,211.5 Q148,214.5 166,228"/>
<path d="M108,224 L132,221 Q150,224 168,238"/>
<path d="M106,233.5 L132,230.5 Q150,233 166,244"/>
</g>
<!-- neck & V -->
<path d="M97.5,180 L97,196 L103,212 L107,200 L116,195 L116.5,180 Z" fill="#c39783"/>
<path d="M99,196 L103,214 L106.5,222 L108.5,210 L112,196 Z" fill="#c98c80"/>
<!-- hair back -->
<path d="M106,129.8 Q94,130 89.5,140 Q86.5,148 86,160 Q85,175 80,188 Q73.5,200 72,208 Q71.5,216 77,218.5 Q84,219.5 88.5,212 Q93,203 96,193 L97,182 L116,182 L117,194 Q119,204 123,211 Q127,216.5 131.5,214.5 Q136.5,211 136.8,203 Q137,196 133.5,188 Q130.5,177 129.5,163 Q128.5,150 125,141 Q120,129.6 106,129.8 Z" fill="#36241c"/>
<!-- face -->
<path d="M106,138 Q96,138.5 92.5,146 Q90.2,154 91,164 Q92.4,174 98,181 Q102.5,186 106.5,186 Q111,186 115.5,181 Q121,173 122.2,164 Q123,153 119.8,146 Q116,138.5 106,138 Z" fill="#d0a996"/>
<ellipse cx="98" cy="170" rx="4" ry="3" fill="#d08a80" opacity="0.35"/>
<ellipse cx="116" cy="170" rx="4" ry="3" fill="#d08a80" opacity="0.3"/>
<!-- hairline: part on left, sweeping right -->
<path d="M95,144.5 Q100.5,139.6 108,140 Q116,141.2 120,148 Q122.4,153 122.4,161 L125,150 Q122,136 108,133.5 Q96,133 92.2,141 Q90.4,147 90.6,158 Q91.4,149.5 95,144.5 Z" fill="#36241c"/>
<path d="M92.5,176 Q95,181 100,185 L97,187 L92,180 Z" fill="#a87c68" opacity="0.5"/>
<path d="M121,176 Q118,181 113,185 L116.5,187 L121.5,180 Z" fill="#a87c68" opacity="0.35"/>
<!-- hair strands front over shoulders -->
<path d="M97,182 Q95,196 90,206 Q86,214 80,217 Q88,219 93,212 Q99,203 100,192 Z" fill="#36241c"/>
<path d="M116,182 Q117,196 121,206 Q124,213 129,216 Q120,221 113,214 Q108,206 111,192 Z" fill="#36241c"/>
<g fill="none" stroke="#5e4032" stroke-width="2.2" opacity="0.55" stroke-linecap="round">
<path d="M94,138 Q88,150 87.5,166 Q86,180 81,192 Q76,202 77,211"/>
<path d="M98,133 Q106,131 114,134"/>
<path d="M120,139 Q125.5,152 126,166 Q127.5,180 131,191 Q134,200 132,209"/>
<path d="M92,192 Q88,204 84,212"/>
<path d="M121,196 Q124,205 128,210"/>
</g>
</g>
<g filter="url(#bl2)">
<g fill="none" stroke="#6a544c" stroke-width="0.55">
<rect x="94.3" y="157.3" width="10" height="7.4" rx="2"/>
<rect x="109.3" y="157.3" width="10" height="7.4" rx="2"/>
<path d="M104.3,160 Q106.8,158.8 109.3,160"/>
</g>
<ellipse cx="99.5" cy="160.6" rx="2" ry="1" fill="#3a2a26"/>
<ellipse cx="114" cy="160.6" rx="2" ry="1" fill="#3a2a26"/>
<path d="M96,156.2 Q99.5,154.8 103,156" stroke="#5a3e32" stroke-width="0.8" fill="none"/>
<path d="M110.5,156 Q114,154.8 117.5,156.2" stroke="#5a3e32" stroke-width="0.8" fill="none"/>
<path d="M105,169.5 Q106.8,171 108.6,169.5" stroke="#a87c68" stroke-width="0.8" fill="none"/>
<path d="M101.8,176.3 Q106.8,178 112,176" stroke="#9a5a52" stroke-width="1.1" fill="none"/>
</g>
</g>
</svg>

<svg style="left:0;top:0" width="740" height="416" viewBox="0 0 740 416">
<defs>
<filter id="b1" x="-20%" y="-20%" width="140%" height="140%"><feGaussianBlur stdDeviation="1.2"/></filter>
<filter id="b05" x="-20%" y="-20%" width="140%" height="140%"><feGaussianBlur stdDeviation="0.4"/></filter>
<linearGradient id="tbg" x1="0" y1="0" x2="1" y2="0">
<stop offset="0" stop-color="#c9d8e6"/><stop offset="0.05" stop-color="#9db6d0"/><stop offset="0.09" stop-color="#4b79b4"/><stop offset="0.3" stop-color="#2f66ad"/><stop offset="0.6" stop-color="#2b62a8"/><stop offset="0.76" stop-color="#24528f"/><stop offset="1" stop-color="#234f88"/>
</linearGradient>
<radialGradient id="orb" cx="0.5" cy="0.4" r="0.6"><stop offset="0" stop-color="#5aa0d8"/><stop offset="0.7" stop-color="#1f5a9a"/><stop offset="1" stop-color="#173f78"/></radialGradient>
<linearGradient id="tbtn1" x1="0" y1="0" x2="0" y2="1"><stop offset="0" stop-color="#c4e2f0"/><stop offset="0.5" stop-color="#9ccfe8"/><stop offset="1" stop-color="#84c4e4"/></linearGradient>
<linearGradient id="tbtn2" x1="0" y1="0" x2="0" y2="1"><stop offset="0" stop-color="#86c2e2"/><stop offset="0.5" stop-color="#5aa9d4"/><stop offset="1" stop-color="#4a9fd0"/></linearGradient>
<clipPath id="tbc"><rect x="0" y="0" width="740" height="11"/></clipPath>
</defs>
<!-- title bar -->
<g clip-path="url(#tbc)">
<rect x="0" y="0" width="740" height="11" fill="url(#tbg)"/>
<g filter="url(#b1)" fill="#cfe0f0">
<rect x="50" y="4" width="22" height="8" opacity="0.85"/>
<rect x="90" y="4" width="20" height="8" opacity="0.8"/>
<rect x="135" y="4" width="14" height="7" opacity="0.6"/>
<rect x="217" y="6" width="14" height="6" fill="#5aa070" opacity="0.8"/>
<rect x="178" y="5" width="10" height="6" fill="#c04060" opacity="0.7"/>
<rect x="262" y="5" width="10" height="6" fill="#8090a8" opacity="0.6"/>
<rect x="293" y="4" width="22" height="8" opacity="0.9"/>
<rect x="338" y="5" width="16" height="7" opacity="0.7"/>
<rect x="376" y="4" width="16" height="8" opacity="0.85"/>
<rect x="418" y="4" width="14" height="8" opacity="0.8"/>
<rect x="458" y="4" width="18" height="8" opacity="0.9"/>
<rect x="580" y="4" width="14" height="8" opacity="0.45"/>
<rect x="620" y="8" width="14" height="4" opacity="0.4"/>
<rect x="545" y="3" width="12" height="6" fill="#a06070" opacity="0.4"/>
</g>
<ellipse cx="24" cy="5.5" rx="22" ry="6" fill="#e4edf5" filter="url(#b1)" opacity="0.9"/>
<!-- panopto tiny icon -->
<path d="M5.5,1.2 L9.3,8.8 L1.7,8.8 Z" fill="#3a9a3c"/>
<circle cx="5.5" cy="6.2" r="1.3" fill="#d8f0d0"/>
<!-- window buttons -->
<rect x="683" y="-1" width="28.5" height="9" rx="1.5" fill="#7488a8" stroke="#b8c4d4" stroke-width="0.5" opacity="0.95"/>
<rect x="711.5" y="-1" width="26.5" height="9" rx="1.5" fill="#c83c3a" stroke="#e0b0b0" stroke-width="0.5"/><rect x="712" y="0" width="25.5" height="3" fill="#e08888" opacity="0.6"/>
<line x1="697" y1="0" x2="697" y2="8" stroke="#c8d4e4" stroke-width="0.4"/>
<rect x="688" y="4.3" width="5.5" height="1.6" fill="#fff"/>
<rect x="701" y="2" width="5.2" height="4" fill="none" stroke="#fff" stroke-width="1.1"/>
<path d="M722.3,2 L726.7,6 M726.7,2 L722.3,6" stroke="#fff" stroke-width="1.3"/>
</g>
<!-- nav icons -->
<circle cx="18" cy="24.2" r="6" fill="none" stroke="#fff" stroke-width="1.2"/>
<rect x="14.6" y="22" width="5" height="4.4" rx="0.8" fill="#fff"/>
<path d="M19.9,24.2 L22,22.4 V26 Z" fill="#fff"/>
<g stroke="#3c4854" fill="none" stroke-width="0.8">
<circle cx="152" cy="24.2" r="7.2"/>
<path d="M147.5,21.6 H156.5 M147.5,24.2 H156.5 M147.5,26.8 H156.5" stroke-width="0.9"/>
<circle cx="272.5" cy="24.2" r="7.2"/>
<circle cx="272.5" cy="24.2" r="2.6" stroke-width="1.6"/>
<path d="M272.5,20 v-1.4 M272.5,28.4 v1.4 M268.3,24.2 h-1.4 M276.7,24.2 h1.4" stroke-width="1.2"/>
</g>
<!-- stop button -->
<circle cx="28.8" cy="62" r="17" fill="#fff" stroke="#e2e2e2" stroke-width="0.8"/>
<rect x="20.8" y="54" width="16" height="16" fill="#f3a9b1"/>
<!-- cursor -->
<path d="M23.3,59.3 V68.6 L25.4,66.7 L26.9,70 L28.2,69.4 L26.8,66.2 L29.6,66 Z" fill="#fff" stroke="#111" stroke-width="0.6" stroke-linejoin="round"/>
<!-- info icons -->
<circle cx="69.2" cy="110" r="3.2" fill="#3d8fd0"/>
<circle cx="69.2" cy="110" r="3.2" fill="none" stroke="#8cc0e8" stroke-width="0.5"/>
<rect x="68.8" y="109.4" width="0.9" height="2.3" fill="#fff"/><rect x="68.8" y="107.9" width="0.9" height="0.9" fill="#fff"/>
<circle cx="725.7" cy="380.5" r="3.4" fill="#3d8fd0"/>
<rect x="725.3" y="380" width="0.9" height="2.4" fill="#fff"/><rect x="725.3" y="378.4" width="0.9" height="0.9" fill="#fff"/>
<!-- meter -->
<rect x="215" y="118" width="7.4" height="113" fill="#e8e8e8"/>
<rect x="215.4" y="118" width="6.6" height="20.5" fill="#f0c6cc"/>
<rect x="215.4" y="138.5" width="6.6" height="23.5" fill="#f0ebb6"/>
<rect x="215.4" y="162" width="6.6" height="69" fill="#bdeac0"/>
<g stroke="#e8e8e8" stroke-width="0.6">
<path d="M218.7,118 V231"/>
<path d="M215,121.2 h8 M215,124.4 h8 M215,127.6 h8 M215,130.8 h8 M215,134 h8 M215,137.2 h8 M215,140.4 h8 M215,143.6 h8 M215,146.8 h8 M215,150 h8 M215,153.2 h8 M215,156.4 h8 M215,159.6 h8 M215,162.8 h8 M215,166 h8 M215,169.2 h8 M215,172.4 h8 M215,175.6 h8 M215,178.8 h8 M215,182 h8 M215,185.2 h8 M215,188.4 h8 M215,191.6 h8 M215,194.8 h8 M215,198 h8 M215,201.2 h8 M215,204.4 h8 M215,207.6 h8 M215,210.8 h8 M215,214 h8 M215,217.2 h8 M215,220.4 h8 M215,223.6 h8 M215,226.8 h8"/>
</g>
<!-- volume slider -->
<rect x="227.1" y="118" width="1" height="70" fill="#97a5b0"/>
<rect x="227.1" y="188" width="1" height="43" fill="#3b8fd0"/>
<circle cx="227.6" cy="188.2" r="3.3" fill="#3a8fd0"/>
<!-- checkmarks -->
<path d="M12,340 L14.3,342.6 L18.4,337" stroke="#fff" stroke-width="1.1" fill="none"/>
<path d="M252,362 L254.3,364.6 L258.4,359" stroke="#fff" stroke-width="1.1" fill="none"/>
<!-- sliders -->
<rect x="356" y="380.3" width="41" height="0.9" fill="#7a7a7a"/>
<rect x="362.5" y="377.4" width="4.6" height="6.6" rx="0.8" fill="#d0d0d0" stroke="#aaa" stroke-width="0.4"/>
<rect x="438.4" y="380.3" width="40" height="0.9" fill="#aaa"/>
<rect x="439" y="377.4" width="4.6" height="6.6" rx="0.8" fill="#dedede" stroke="#c4c4c4" stroke-width="0.4"/>
<!-- taskbar -->
<g>
<rect x="0" y="394" width="740" height="22" fill="none"/>
<path d="M480,394 Q520,398 545,416 L560,416 Q530,398 492,394 Z" fill="#8cc4ec" opacity="0.55" filter="url(#b1)"/>
<rect x="0" y="393.6" width="740" height="0.8" fill="#9cc8e8" opacity="0.7"/>
<rect x="734" y="394" width="6" height="22" fill="#3d6a9e" opacity="0.8"/>
<!-- start orb -->
<circle cx="14.3" cy="405.3" r="9.3" fill="url(#orb)"/>
<circle cx="14.3" cy="405.3" r="9.3" fill="none" stroke="#8cc4e4" stroke-width="0.7" opacity="0.8"/>
<g filter="url(#b05)" transform="translate(14.3 405.5) scale(1.18) translate(-13.9 -405.5)">
<path d="M9.6,400.8 Q11.8,399.6 13.8,400.8 L13.2,404.8 Q11.2,403.8 9,404.9 Z" fill="#e8502c"/>
<path d="M14.9,401.2 Q17,402.4 19.2,401.2 L18.6,405.2 Q16.4,406.4 14.3,405.2 Z" fill="#7cc242"/>
<path d="M8.8,405.9 Q11,404.8 13,405.9 L12.4,409.9 Q10.4,408.9 8.2,410 Z" fill="#3ca0e8"/>
<path d="M14.1,406.3 Q16.2,407.5 18.4,406.3 L17.8,410.3 Q15.6,411.5 13.5,410.3 Z" fill="#f8cc3c"/>
</g>
<!-- IE -->
<g filter="url(#b05)">
<text x="40.6" y="412.6" font-family="Liberation Sans, sans-serif" font-weight="bold" font-size="24" fill="#8fe0fb">e</text>
<path d="M41.6,411.4 Q38.6,405 45,399.6 Q50.6,395.4 55.4,397" stroke="#e4d44c" stroke-width="1.7" fill="none"/>
<path d="M51.4,396.8 Q54.2,395.6 55.6,397.6" stroke="#8ccc5c" stroke-width="1.8" fill="none"/>
</g>
<!-- folder -->
<g filter="url(#b05)">
<path d="M74,400 L76,398.6 L82,398.6 L83,400 L90,400 L90,412.3 L74,412.3 Z" fill="#f3e6a2"/>
<rect x="75.5" y="402" width="13" height="4" fill="#fbf4c8"/>
<rect x="75" y="407" width="14.5" height="4.6" fill="#a8d4e2"/>
<rect x="80" y="400" width="1.6" height="1.2" fill="#444"/><rect x="84" y="400.4" width="1.6" height="1.2" fill="#444"/>
</g>
<!-- media player -->
<g filter="url(#b05)">
<rect x="108.4" y="399.5" width="11.4" height="12.5" fill="#86bfe6"/>
<circle cx="114" cy="405.9" r="4.9" fill="#e0741e"/>
<path d="M112.4,402.9 L117,405.9 L112.4,408.9 Z" fill="#fff"/>
</g>
<!-- chrome -->
<g filter="url(#b05)">
<circle cx="149.5" cy="405.5" r="8" fill="#e6443a"/>
<path d="M149.5,405.5 L142.6,401.5 A8,8 0 0 0 145.5,412.4 Z M149.5,405.5 L145.5,412.4 A8,8 0 0 0 149.6,413.5 L153.5,406.6Z" fill="#34a853"/>
<path d="M149.5,405.5 L157.4,404 A8,8 0 0 1 149.6,413.5 Z" fill="#f8c02c"/>
<circle cx="149.5" cy="405.5" r="3.7" fill="#fff"/>
<circle cx="149.5" cy="405.5" r="2.9" fill="#4a88e8"/>
</g>
<!-- panopto button -->
<rect x="167" y="394.3" width="31" height="22" fill="url(#tbtn1)" stroke="#d8ecf6" stroke-width="0.6"/>
<g filter="url(#b05)" fill="#3c9c40">
<path d="M183.3,397.2 L187.6,399.6 L186,403.2 L180.2,400.6 Z"/>
<path d="M179.2,401.6 L180.8,407.2 L178.4,411.8 L175.8,407 Z" fill="#2e8c3a"/>
<path d="M188.6,403 L191.2,408 L188,412.4 L181,412.4 L180.6,409 L186.6,408.4 Z" fill="#4cac48"/>
<path d="M182,403.4 L186.6,405.9 L182,408.4 Z" fill="#e8f6e8"/>
</g>
<!-- third button -->
<rect x="200.8" y="394.3" width="31.5" height="22" fill="url(#tbtn2)" stroke="#a8d4ec" stroke-width="0.6"/>
<g filter="url(#b05)">
<rect x="208" y="398" width="11.5" height="10.5" fill="#f6f6f0" stroke="#2c3c50" stroke-width="0.7"/>
<rect x="208.6" y="400.4" width="7" height="2" fill="#f0d848"/>
<rect x="208.6" y="403.6" width="6" height="2" fill="#4a78c8"/>
<path d="M215,401 L223.6,410.6 L221.8,411.6 L219.4,408.4 L217,410.4 Z" fill="#fff" stroke="#2c3c50" stroke-width="0.6"/>
</g>
<!-- tray -->
<path d="M632.2,406.6 L634.6,406.6 L633.4,405 Z" fill="#fff"/>
<g filter="url(#b05)">
<rect x="642.6" y="401.6" width="5" height="7.6" fill="#f0f0f0"/><rect x="644" y="400.6" width="2.2" height="1.4" fill="#ddd"/>
<path d="M655.6,401.4 h5 v4 h-5 z" fill="#f4f4f4"/><rect x="655.4" y="401" width="0.8" height="8.6" fill="#eee"/>
<circle cx="660.8" cy="407.6" r="2.1" fill="#e0303a"/>
<path d="M668,404.4 h1.6 l2.4,-2.2 v7.6 l-2.4,-2.2 h-1.6 z" fill="#f4f4f4"/>
<path d="M673.4,403.6 q1.4,2.2 0,4.4" stroke="#d8e4f0" stroke-width="0.7" fill="none"/>
<path d="M681.6,409.4 v-1.4 h1.2 v1.4 z M683.6,409.4 v-2.8 h1.2 v2.8 z M685.6,409.4 v-4.4 h1.2 v4.4 z M687.6,409.4 v-6.4 h1.2 v6.4 z" fill="#f4f4f4"/>
</g>
</g>
</svg>

<span class="t" style="left:11.5px;top:0.7px;font-size:6.44px;color:#111;text-shadow:0 0 2px #fff,0 0 3px #fff,0 0 4px #fff">Panopto</span>
<span class="t" style="left:33.5px;top:19.8px;font-size:7.96px;color:#fff">Create New Recording</span>
<span class="t" style="left:164.3px;top:19.8px;font-size:7.49px;color:#46525e">Manage Recordings</span>
<span class="t" style="left:287px;top:19.8px;font-size:7.19px;color:#46525e">Settings</span>
<span class="t" style="right:7px;top:15.0px;font-size:6.28px;color:#e8eaec">unified\cbarrett8495</span>
<span class="t" style="right:7px;top:24.3px;font-size:6.25px;color:#fff;font-weight:bold">Sign out</span>
<span class="t" style="left:100.5px;top:45.5px;font-size:6.51px;color:#e0203a;font-weight:bold">Starting Devices</span>
<span class="t" style="left:100.5px;top:64.5px;font-size:6.70px;color:#444">Folder</span>
<span class="t" style="left:100.5px;top:79.8px;font-size:6.74px;color:#444">Name</span>
<span class="t" style="left:139px;top:64.5px;font-size:6.83px;color:#444">VWCC Spring 2020 - Spring 2020 MTH 132 - V1 Business Mathematics</span>
<span class="t" style="left:139px;top:79.8px;font-size:6.77px;color:#444">Chapter 14</span>
<span class="t" style="left:-71px;width:200px;text-align:center;top:81.0px;font-size:5.83px;color:#d4d4d4">Stop</span>
<span class="t" style="left:708px;top:45.0px;font-size:6.46px;color:#dcdcdc">Webcast</span>
<span class="t" style="left:605.5px;width:200px;text-align:center;top:80.0px;font-size:6.35px;color:#b4d0e6">Join Session</span>
<span class="t" style="left:10.4px;top:105.5px;font-size:6.90px;color:#444">Primary Sources</span>
<span class="t" style="left:248px;top:104.5px;font-size:6.77px;color:#444">Main Screen</span>
<span class="t" style="left:196.5px;width:200px;text-align:center;top:104.8px;font-size:7.60px;color:#666">✕</span>
<span class="t" style="left:10.4px;top:237.8px;font-size:6.97px;color:#444">Video</span>
<span class="t" style="left:10.4px;top:254.5px;font-size:6.92px;color:#444">Audio</span>
<span class="t" style="left:10.4px;top:270.5px;font-size:6.90px;color:#444">Quality</span>
<span class="t" style="left:37px;top:237.8px;font-size:6.83px;color:#9a9a9a">HD Pro Webcam C920</span>
<span class="t" style="left:37px;top:254.5px;font-size:6.90px;color:#9a9a9a">Microphone (HD Pro Webcam C920)</span>
<span class="t" style="left:37px;top:270.5px;font-size:7.05px;color:#9a9a9a">High</span>
<span class="t" style="left:32px;top:289.3px;font-size:6.54px;color:#dadada">Capture Computer Audio</span>
<span class="t" style="left:10.4px;top:310.2px;font-size:6.42px;color:#333;font-weight:bold">Secondary Sources</span>
<span class="t" style="left:24.2px;top:323.0px;font-size:6.93px;color:#444">Capture PowerPoint</span>
<span class="t" style="left:24.2px;top:335.1px;font-size:6.82px;color:#444">Capture Main Screen</span>
<span class="t" style="left:21px;width:200px;text-align:center;top:351.5px;font-size:6.97px;color:#fff">Add Another Video Source</span>
<span class="t" style="left:264px;top:357.1px;font-size:6.92px;color:#fff">Enable screen capture preview</span>
<span class="t" style="left:245.7px;top:376.1px;font-size:6.77px;color:#555">Resolution</span>
<span class="t" style="left:286.8px;top:376.1px;font-size:6.68px;color:#aaa">1280 x 1024</span>
<span class="t" style="left:342px;top:376.1px;font-size:6.37px;color:#555">fps</span>
<span class="t" style="left:402.7px;top:376.1px;font-size:6.27px;color:#555">8</span>
<span class="t" style="left:419px;top:376.1px;font-size:6.62px;color:#555">kbps</span>
<span class="t" style="left:485px;top:376.1px;font-size:6.41px;color:#555">340</span>
<span class="t" style="left:613px;width:200px;text-align:center;top:397.1px;font-size:6.19px;color:#fff">12:27 PM</span>
<span class="t" style="left:613px;width:200px;text-align:center;top:406.3px;font-size:6.29px;color:#fff">4/20/2020</span>
<div class="nest"><div class="b" style="left:0;top:0;width:740px;height:416px;background:#fff"><div class="b" style="left:0;top:0;width:740px;height:36px;background:#1e2a36"></div><div class="b" style="left:7px;top:102px;width:228px;height:286px;background:#ddd"></div><div class="b" style="left:243px;top:102px;width:492px;height:286px;background:#555"></div><div class="b" style="left:0;top:394px;width:740px;height:22px;background:#2a70b8"></div></div></div>
</div></div>
</div></div>
</div></div>
</div></div>
</div></div>
</div></div>
</body></html>
